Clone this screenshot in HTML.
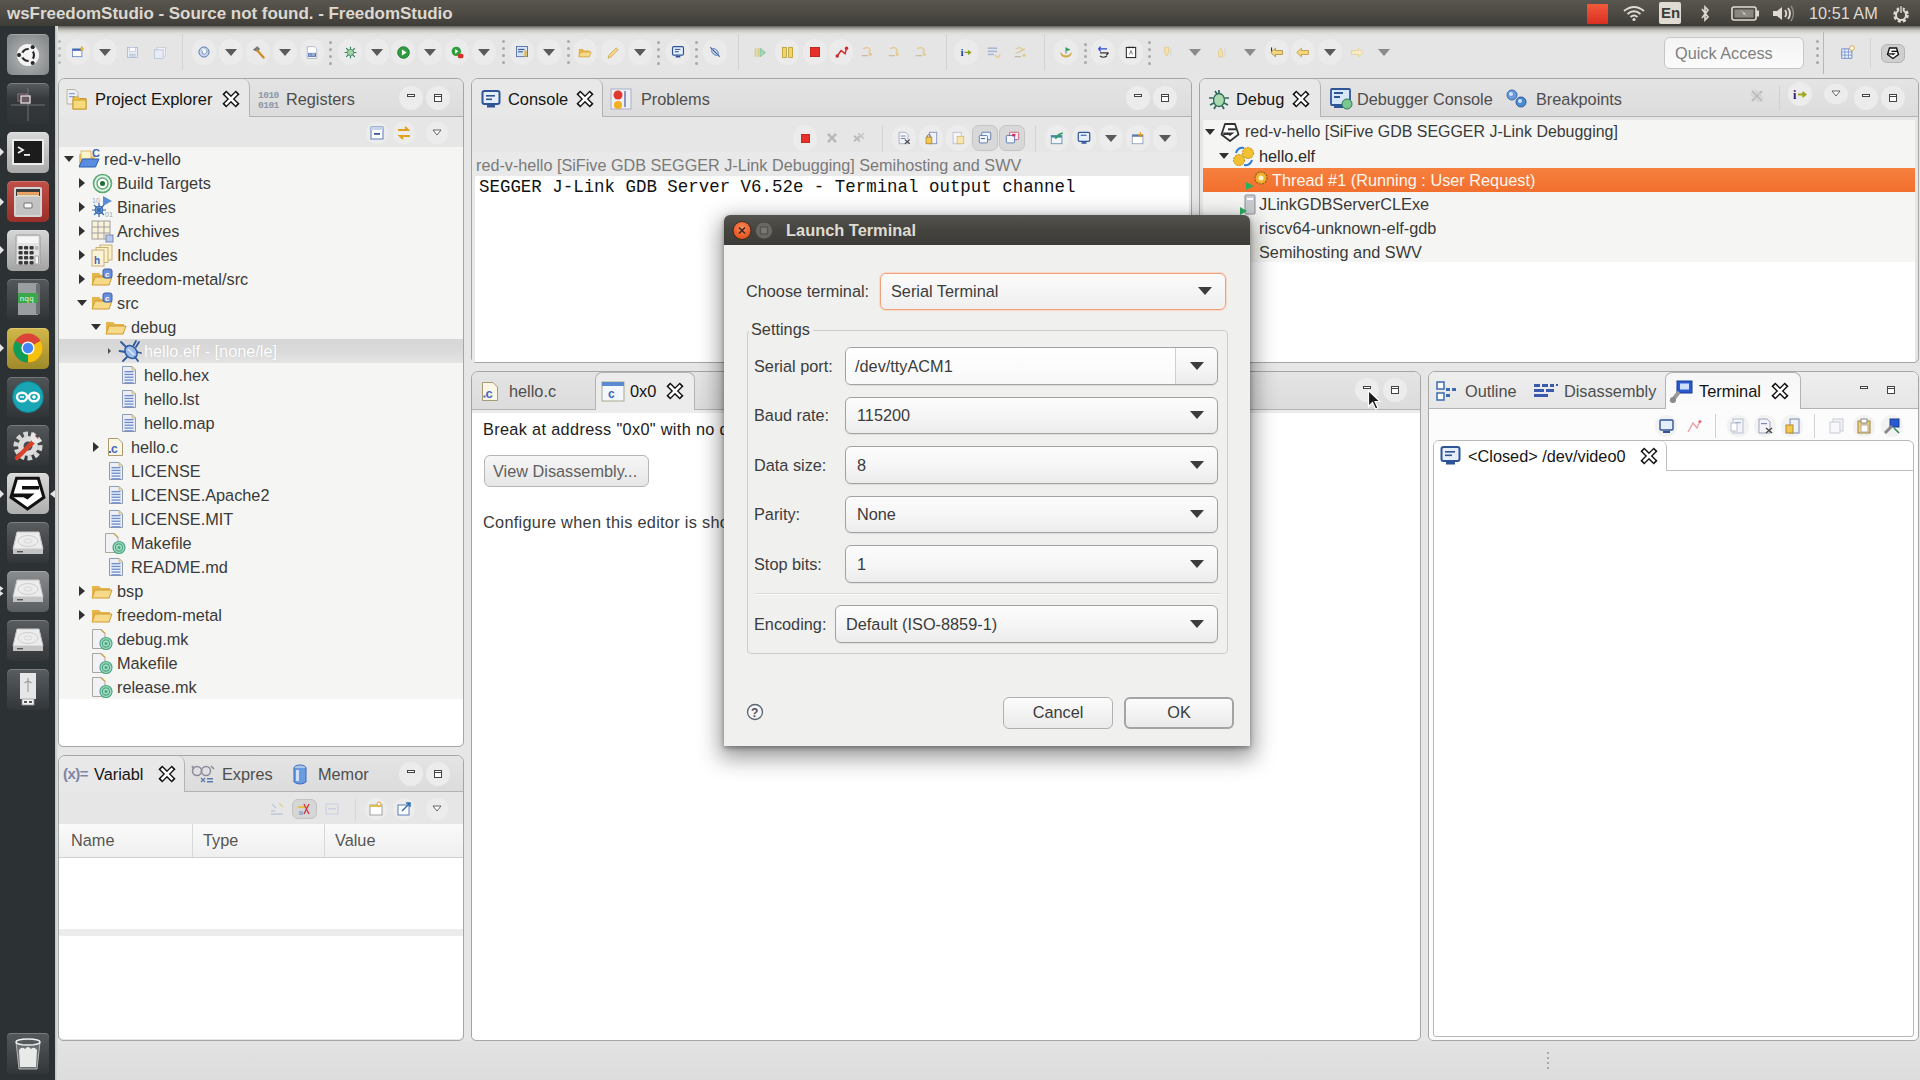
<!DOCTYPE html>
<html><head><meta charset="utf-8">
<style>
*{margin:0;padding:0;box-sizing:border-box}
html,body{width:1920px;height:1080px;overflow:hidden}
body{position:relative;background:#e6e6e6;font-family:"Liberation Sans",sans-serif}
.a{position:absolute}
.t{position:absolute;white-space:nowrap;line-height:24px;font-family:"Liberation Sans",sans-serif}
svg.a{overflow:visible}
</style></head><body>
<div class="a" style="left:0px;top:0px;width:1920px;height:26px;background:linear-gradient(#59564f,#4f4c46 45%,#3e3c37)"></div>
<div class="t" style="left:7px;top:2px;line-height:24px;font-size:17px;font-weight:bold;color:#dcd8cf;letter-spacing:-0.04px">wsFreedomStudio - Source not found. - FreedomStudio</div>
<div class="a" style="left:1587px;top:4px;width:21px;height:20px;background:linear-gradient(#f25a3a,#d92f22);border-radius:1px"></div>
<svg class="a" style="left:1622px;top:5px;" width="24" height="16" viewBox="0 0 24 16"><path d="M2 6 Q12 -2 22 6" stroke="#dfdbd2" stroke-width="2" fill="none"/><path d="M5.5 9 Q12 3.5 18.5 9" stroke="#dfdbd2" stroke-width="2" fill="none"/><path d="M8.5 12 Q12 9 15.5 12" stroke="#dfdbd2" stroke-width="2" fill="none"/><circle cx="12" cy="14.5" r="1.6" fill="#dfdbd2"/></svg>
<div class="a" style="left:1659px;top:2px;width:22px;height:22px;background:#dfdbd2;border-radius:2px"></div>
<div class="t" style="left:1661px;top:1px;line-height:24px;font-size:15px;font-weight:bold;color:#3c3b37">En</div>
<svg class="a" style="left:1699px;top:4px;" width="12" height="19" viewBox="0 0 12 19"><path d="M3 5 L9 13 L6 16 V3 L9 6 L3 14" stroke="#dfdbd2" stroke-width="1.6" fill="none"/></svg>
<svg class="a" style="left:1731px;top:6px;" width="29" height="15" viewBox="0 0 29 15"><rect x="1" y="1" width="24" height="13" rx="2" fill="none" stroke="#dfdbd2" stroke-width="1.6"/><rect x="25" y="4.5" width="3" height="6" fill="#dfdbd2"/><rect x="3.5" y="3.5" width="19" height="8" fill="#8a8780"/><path d="M9 4 L15 8 L13 8 L18 11 L11 7.5 L13 7.5 Z" fill="#dfdbd2"/></svg>
<svg class="a" style="left:1771px;top:4px;" width="24" height="19" viewBox="0 0 24 19"><path d="M2 7 H6 L11 3 V16 L6 12 H2 Z" fill="#dfdbd2"/><path d="M14 6 Q16.5 9.5 14 13" stroke="#dfdbd2" stroke-width="1.8" fill="none"/><path d="M17 4 Q21 9.5 17 15" stroke="#dfdbd2" stroke-width="1.8" fill="none"/><path d="M20 2 Q25 9.5 20 17" stroke="#8a8780" stroke-width="1.6" fill="none"/></svg>
<div class="t" style="left:1809px;top:1px;line-height:24px;font-size:16.3px;color:#dfdbd2">10:51 AM</div>
<svg class="a" style="left:1891px;top:4px;" width="20" height="20" viewBox="0 0 20 20"><circle cx="10" cy="11" r="6.5" fill="none" stroke="#dfdbd2" stroke-width="2.6" stroke-dasharray="3 2.1"/><circle cx="10" cy="11" r="5" fill="none" stroke="#dfdbd2" stroke-width="2"/><rect x="8.8" y="1.5" width="2.4" height="8" fill="#dfdbd2" stroke="#3c3b37" stroke-width="1"/></svg>
<div class="a" style="left:0px;top:26px;width:55px;height:1054px;background:#2c3134"></div>
<div class="a" style="left:55px;top:26px;width:3px;height:1054px;background:linear-gradient(90deg,#bfc1c1,#e4e4e4)"></div>
<div class="a" style="left:7px;top:34.0px;width:42px;height:41px;background:radial-gradient(circle at 50% 55%,#b9bcbc,#8e9292 70%,#7d8181);border-radius:5px;box-shadow:inset 0 1px 0 rgba(255,255,255,.22)"></div>
<div class="a" style="left:7px;top:83.0px;width:42px;height:41px;background:linear-gradient(#5a5d60,#35393b 40%,#303437);border-radius:5px;box-shadow:inset 0 1px 0 rgba(255,255,255,.22)"></div>
<div class="a" style="left:7px;top:131.8px;width:42px;height:41px;background:linear-gradient(#d9d9d9,#a9a9a9);border-radius:5px;box-shadow:inset 0 1px 0 rgba(255,255,255,.22)"></div>
<div class="a" style="left:7px;top:181.0px;width:42px;height:41px;background:linear-gradient(#c05048,#9a2e28);border-radius:5px;box-shadow:inset 0 1px 0 rgba(255,255,255,.22)"></div>
<div class="a" style="left:7px;top:229.8px;width:42px;height:41px;background:linear-gradient(#d6d6d6,#a3a3a3);border-radius:5px;box-shadow:inset 0 1px 0 rgba(255,255,255,.22)"></div>
<div class="a" style="left:7px;top:278.5px;width:42px;height:41px;background:linear-gradient(#55585a,#303437);border-radius:5px;box-shadow:inset 0 1px 0 rgba(255,255,255,.22)"></div>
<div class="a" style="left:7px;top:327.5px;width:42px;height:41px;background:linear-gradient(#d2b84a,#a08a28);border-radius:5px;box-shadow:inset 0 1px 0 rgba(255,255,255,.22)"></div>
<div class="a" style="left:7px;top:376.5px;width:42px;height:41px;background:linear-gradient(#505456,#303437);border-radius:5px;box-shadow:inset 0 1px 0 rgba(255,255,255,.22)"></div>
<div class="a" style="left:7px;top:425.0px;width:42px;height:41px;background:linear-gradient(#54575a,#303437);border-radius:5px;box-shadow:inset 0 1px 0 rgba(255,255,255,.22)"></div>
<div class="a" style="left:7px;top:473.2px;width:42px;height:41px;background:linear-gradient(#dadada,#aeaeae);border-radius:5px;box-shadow:inset 0 1px 0 rgba(255,255,255,.22)"></div>
<div class="a" style="left:7px;top:522.0px;width:42px;height:41px;background:linear-gradient(#5a5d5f,#323638);border-radius:5px;box-shadow:inset 0 1px 0 rgba(255,255,255,.22)"></div>
<div class="a" style="left:7px;top:570.8px;width:42px;height:41px;background:linear-gradient(#8a8d8f,#5a5e60);border-radius:5px;box-shadow:inset 0 1px 0 rgba(255,255,255,.22)"></div>
<div class="a" style="left:7px;top:619.5px;width:42px;height:41px;background:linear-gradient(#5a5d5f,#323638);border-radius:5px;box-shadow:inset 0 1px 0 rgba(255,255,255,.22)"></div>
<div class="a" style="left:7px;top:668.5px;width:42px;height:41px;background:linear-gradient(#5a5d5f,#323638);border-radius:5px;box-shadow:inset 0 1px 0 rgba(255,255,255,.22)"></div>
<svg class="a" style="left:15.0px;top:41.5px;" width="26" height="26" viewBox="0 0 26 26"><circle cx="13" cy="13" r="11" fill="#f4f4f4"/><circle cx="13" cy="13" r="6" fill="none" stroke="#2a2a2a" stroke-width="2.2"/><circle cx="17.6" cy="5.2" r="1.9" fill="#2a2a2a"/><circle cx="4.2" cy="13" r="1.9" fill="#2a2a2a"/><circle cx="17.6" cy="20.8" r="1.9" fill="#2a2a2a"/><circle cx="16.2" cy="7.5" r="2.6" fill="#f4f4f4"/><circle cx="6.8" cy="13" r="2.6" fill="#f4f4f4"/><circle cx="16.2" cy="18.5" r="2.6" fill="#f4f4f4"/><circle cx="17.6" cy="5.2" r="1.9" fill="#2a2a2a"/><circle cx="4.2" cy="13" r="1.9" fill="#2a2a2a"/><circle cx="17.6" cy="20.8" r="1.9" fill="#2a2a2a"/></svg>
<svg class="a" style="left:8.0px;top:84.0px;" width="40" height="39" viewBox="0 0 40 39"><path d="M20 4 V37 M3 21 H37" stroke="#6e7274" stroke-width="1"/><rect x="10" y="10" width="9" height="7" fill="none" stroke="#8a6a78" stroke-width="1.2"/><rect x="13" y="12" width="9" height="7" fill="#6a5a62" stroke="#e6dde0" stroke-width="1.3"/></svg>
<svg class="a" style="left:11.0px;top:138.3px;" width="34" height="28" viewBox="0 0 34 28"><rect x="1" y="1" width="32" height="26" rx="1" fill="#ececec"/><rect x="3" y="3" width="28" height="22" fill="#1c1c1c"/><path d="M7 9 L12 12 L7 15" stroke="#f0f0f0" stroke-width="1.8" fill="none"/><rect x="13" y="16" width="6" height="1.8" fill="#f0f0f0"/></svg>
<svg class="a" style="left:13.0px;top:184.5px;" width="30" height="34" viewBox="0 0 30 34"><rect x="1" y="2" width="28" height="30" rx="2" fill="#d4d4d4"/><rect x="3" y="4" width="24" height="7" fill="#3a3a3a"/><rect x="4" y="7" width="22" height="2.5" fill="#f0a060"/><rect x="4" y="9.5" width="22" height="1.5" fill="#f6d6a0"/><rect x="3" y="12" width="24" height="18" fill="#c2c2c2"/><rect x="11" y="18" width="8" height="5" rx="1" fill="#f6f6f6" stroke="#555" stroke-width="0.8"/></svg>
<svg class="a" style="left:15.0px;top:234.3px;" width="26" height="32" viewBox="0 0 26 32"><rect x="1" y="1" width="24" height="30" rx="1.5" fill="#e4e4e4" stroke="#9a9a9a"/><rect x="3" y="3" width="20" height="6" fill="#f6f6f6"/><rect x="3.5" y="12" width="4.2" height="3.6" rx="1" fill="#3a3a3a"/><rect x="9.0" y="12" width="4.2" height="3.6" rx="1" fill="#3a3a3a"/><rect x="14.5" y="12" width="4.2" height="3.6" rx="1" fill="#3a3a3a"/><rect x="3.5" y="17" width="4.2" height="3.6" rx="1" fill="#3a3a3a"/><rect x="9.0" y="17" width="4.2" height="3.6" rx="1" fill="#3a3a3a"/><rect x="14.5" y="17" width="4.2" height="3.6" rx="1" fill="#3a3a3a"/><rect x="3.5" y="22" width="4.2" height="3.6" rx="1" fill="#3a3a3a"/><rect x="9.0" y="22" width="4.2" height="3.6" rx="1" fill="#3a3a3a"/><rect x="14.5" y="22" width="4.2" height="3.6" rx="1" fill="#3a3a3a"/><rect x="3.5" y="27" width="4.2" height="3.6" rx="1" fill="#3a3a3a"/><rect x="9.0" y="27" width="4.2" height="3.6" rx="1" fill="#3a3a3a"/><rect x="14.5" y="27" width="4.2" height="3.6" rx="1" fill="#3a3a3a"/><rect x="20" y="12" width="3.5" height="4" rx="1" fill="#bbb"/><rect x="20" y="22" width="3.5" height="8" fill="#f8f8f8" stroke="#777" stroke-width="0.6"/></svg>
<svg class="a" style="left:14.0px;top:281.0px;" width="28" height="36" viewBox="0 0 28 36"><rect x="4" y="2" width="20" height="32" fill="#9a9ea0"/><rect x="22" y="3" width="4" height="30" fill="#6c7072"/><rect x="4" y="12" width="20" height="10" fill="#3aa84a"/><text x="5.5" y="20" font-size="8" fill="#e8f5e8" font-family="Liberation Mono">nqq</text></svg>
<svg class="a" style="left:12.0px;top:332.0px;" width="32" height="32" viewBox="0 0 32 32"><circle cx="16" cy="16" r="14.5" fill="#db4437"/><path d="M16 16 L28.6 8.75 A14.5 14.5 0 0 1 16 30.5 Z" fill="#f4c20d"/><path d="M16 16 L16 30.5 A14.5 14.5 0 0 1 3.4 8.75 Z" fill="#0f9d58"/><circle cx="16" cy="16" r="6.6" fill="#fff"/><circle cx="16" cy="16" r="5.2" fill="#4285f4"/></svg>
<svg class="a" style="left:10.0px;top:379.0px;" width="36" height="36" viewBox="0 0 36 36"><circle cx="18" cy="18" r="15.5" fill="#1aa5b5" stroke="#0e7e8c"/><ellipse cx="12" cy="18" rx="5" ry="4.3" fill="none" stroke="#fff" stroke-width="2.4"/><ellipse cx="24" cy="18" rx="5" ry="4.3" fill="none" stroke="#fff" stroke-width="2.4"/><path d="M10 18 H14 M22 18 H26 M24 16 V20" stroke="#fff" stroke-width="1.4"/></svg>
<svg class="a" style="left:10.0px;top:427.5px;" width="36" height="36" viewBox="0 0 36 36"><circle cx="18" cy="18" r="12" fill="none" stroke="#d6d6d6" stroke-width="5" stroke-dasharray="4.4 3"/><circle cx="18" cy="18" r="10" fill="#dcdcdc"/><circle cx="18" cy="18" r="4.5" fill="#4a4d50"/><path d="M7 30 L26 11" stroke="#d8402a" stroke-width="4.5" stroke-linecap="round"/><path d="M24 4 A6 6 0 1 0 32 12 L28 11 L25 8 Z" fill="#e8e8e8"/></svg>
<svg class="a" style="left:7px;top:473.0px;" width="42" height="42" viewBox="0 0 42 42"><path d="M9.6 5.3 H31.3 L36.9 24.3 L20.5 35.9 L4 24.3 Z" fill="#fff" stroke="#111" stroke-width="3" stroke-linejoin="miter"/><rect x="15" y="13" width="17" height="3.5" fill="#111"/><path d="M6 20.6 H27.6 L20.5 26.6 L16.5 24.3 H6 Z" fill="#111"/></svg>
<svg class="a" style="left:11.0px;top:529.5px;" width="34" height="26" viewBox="0 0 34 26"><path d="M6 2 H28 L32 19 H2 Z" fill="#ececec" stroke="#c8c8c8"/><ellipse cx="17" cy="11" rx="10" ry="5.5" fill="none" stroke="#cfcfcf"/><ellipse cx="17" cy="11" rx="4" ry="2" fill="none" stroke="#d8d8d8"/><rect x="2" y="19" width="30" height="5" fill="#c4c4c4"/><rect x="6" y="21" width="6" height="1.4" fill="#555"/></svg>
<svg class="a" style="left:11.0px;top:578.3px;" width="34" height="26" viewBox="0 0 34 26"><path d="M6 2 H28 L32 19 H2 Z" fill="#ececec" stroke="#c8c8c8"/><ellipse cx="17" cy="11" rx="10" ry="5.5" fill="none" stroke="#cfcfcf"/><ellipse cx="17" cy="11" rx="4" ry="2" fill="none" stroke="#d8d8d8"/><rect x="2" y="19" width="30" height="5" fill="#c4c4c4"/><rect x="6" y="21" width="6" height="1.4" fill="#555"/></svg>
<svg class="a" style="left:11.0px;top:627.0px;" width="34" height="26" viewBox="0 0 34 26"><path d="M6 2 H28 L32 19 H2 Z" fill="#ececec" stroke="#c8c8c8"/><ellipse cx="17" cy="11" rx="10" ry="5.5" fill="none" stroke="#cfcfcf"/><ellipse cx="17" cy="11" rx="4" ry="2" fill="none" stroke="#d8d8d8"/><rect x="2" y="19" width="30" height="5" fill="#c4c4c4"/><rect x="6" y="21" width="6" height="1.4" fill="#555"/></svg>
<svg class="a" style="left:18.0px;top:672.0px;" width="20" height="34" viewBox="0 0 20 34"><rect x="2" y="1" width="16" height="26" fill="#e6e6e6"/><path d="M10 6 V20 M6.5 11 L10 9 L13.5 11" stroke="#9a9a9a" stroke-width="1.1" fill="none"/><rect x="4" y="27" width="12" height="6" fill="#f2f2f2" stroke="#999" stroke-width="0.8"/><rect x="6" y="29" width="3" height="2" fill="#555"/><rect x="11" y="29" width="3" height="2" fill="#555"/></svg>
<div class="a" style="left:7px;top:1033px;width:42px;height:41px;background:linear-gradient(#55585a,#323638);border-radius:4px;box-shadow:inset 0 1px 0 rgba(255,255,255,.22)"></div>
<svg class="a" style="left:13px;top:1036px;" width="30" height="35" viewBox="0 0 30 35"><path d="M3 6 H27 L24 33 H6 Z" fill="#6a6e70" stroke="#c8cccc" stroke-width="0.8"/><ellipse cx="15" cy="6" rx="12" ry="3" fill="#55595b" stroke="#eeeeee" stroke-width="1.5"/><path d="M6 14 Q9 10 12 13 Q15 9 18 13 Q21 10 24 14 L23 31 H7 Z" fill="#e8eaea"/></svg>
<svg class="a" style="left:0px;top:148.3px;" width="4" height="8" viewBox="0 0 4 8"><path d="M0 0 L4 4 L0 8 Z" fill="#e5e5e5"/></svg>
<svg class="a" style="left:0px;top:197.5px;" width="4" height="8" viewBox="0 0 4 8"><path d="M0 0 L4 4 L0 8 Z" fill="#e5e5e5"/></svg>
<svg class="a" style="left:0px;top:246.3px;" width="4" height="8" viewBox="0 0 4 8"><path d="M0 0 L4 4 L0 8 Z" fill="#e5e5e5"/></svg>
<svg class="a" style="left:0px;top:344px;" width="4" height="8" viewBox="0 0 4 8"><path d="M0 0 L4 4 L0 8 Z" fill="#e5e5e5"/></svg>
<svg class="a" style="left:0px;top:489.7px;" width="4" height="8" viewBox="0 0 4 8"><path d="M0 0 L4 4 L0 8 Z" fill="#e5e5e5"/></svg>
<svg class="a" style="left:50px;top:489.7px;" width="5" height="8" viewBox="0 0 5 8"><path d="M5 0 L0 4 L5 8 Z" fill="#e5e5e5"/></svg>
<svg class="a" style="left:0px;top:586.3px;" width="4" height="10" viewBox="0 0 4 10"><path d="M0 0 L3.5 2.5 L0 5 Z M0 5 L3.5 7.5 L0 10 Z" fill="#e5e5e5"/></svg>
<div class="a" style="left:58px;top:26px;width:1862px;height:52px;background:#e5e5e5"></div>
<div class="a" style="left:58px;top:26px;width:1862px;height:10px;background:linear-gradient(#63615c,#9b9a95 20%,#c8c8c1 45%,#dfdfdc 75%,#e5e5e5)"></div>
<div class="a" style="left:57.5px;top:40px;width:3px;height:3px;border-radius:1.5px;background:#b8b8b8"></div>
<div class="a" style="left:57.5px;top:47px;width:3px;height:3px;border-radius:1.5px;background:#b8b8b8"></div>
<div class="a" style="left:57.5px;top:54px;width:3px;height:3px;border-radius:1.5px;background:#b8b8b8"></div>
<div class="a" style="left:57.5px;top:61px;width:3px;height:3px;border-radius:1.5px;background:#b8b8b8"></div>
<div class="a" style="left:66.0px;top:39.0px;width:24px;height:26px;border-radius:12px;background:#ebebeb"></div>
<svg class="a" style="left:70px;top:44px;transform:scale(.78);transform-origin:50% 50%;" width="16" height="16" viewBox="0 0 16 16"><rect x="1" y="4" width="12" height="10" fill="#fff" stroke="#5b7fbf"/><rect x="1" y="4" width="12" height="2.5" fill="#3f69b8"/><path d="M13 1 L15 4 L13 7 L11 4 Z" fill="#f1c232" stroke="#b58b00" stroke-width="0.6"/></svg>
<div class="a" style="left:93.0px;top:39.0px;width:24px;height:26px;border-radius:12px;background:#ebebeb"></div>
<div class="a" style="left:98.5px;top:48.5px;width:0;height:0;border-left:6.5px solid transparent;border-right:6.5px solid transparent;border-top:7px solid #5a5a5a"></div>
<svg class="a" style="left:125px;top:45px;transform:scale(.78);transform-origin:50% 50%;" width="15" height="15" viewBox="0 0 15 15"><rect x="1" y="1" width="13" height="13" fill="#e8ecf4" stroke="#a8b6cf"/><rect x="4" y="1" width="7" height="5" fill="#fff" stroke="#a8b6cf" stroke-width="0.7"/><rect x="3.5" y="9" width="8" height="4" fill="#c3cede"/></svg>
<svg class="a" style="left:152px;top:45px;transform:scale(.78);transform-origin:50% 50%;" width="16" height="16" viewBox="0 0 16 16"><rect x="4" y="1" width="11" height="11" fill="#eef1f6" stroke="#b7c2d6" stroke-width="0.8"/><rect x="1" y="4" width="11" height="11" fill="#e8ecf4" stroke="#a8b6cf" stroke-width="0.8"/></svg>
<div class="a" style="left:182px;top:34px;width:1px;height:36px;background:#d3d3d3"></div>
<div class="a" style="left:192.0px;top:39.0px;width:24px;height:26px;border-radius:12px;background:#ebebeb"></div>
<svg class="a" style="left:196px;top:44px;transform:scale(.78);transform-origin:50% 50%;" width="16" height="16" viewBox="0 0 16 16"><circle cx="8" cy="8" r="6.5" fill="#c8d6ee" stroke="#5577aa" stroke-width="1.2"/><path d="M4 5 Q7 7 6 10 Q9 12 11 9 Q13 6 10 4" fill="#fff" stroke="#46639a" stroke-width="0.8"/></svg>
<div class="a" style="left:219.0px;top:39.0px;width:24px;height:26px;border-radius:12px;background:#ebebeb"></div>
<div class="a" style="left:224.5px;top:48.5px;width:0;height:0;border-left:6.5px solid transparent;border-right:6.5px solid transparent;border-top:7px solid #5a5a5a"></div>
<div class="a" style="left:246.0px;top:39.0px;width:24px;height:26px;border-radius:12px;background:#ebebeb"></div>
<svg class="a" style="left:250px;top:44px;transform:scale(.78);transform-origin:50% 50%;" width="17" height="17" viewBox="0 0 17 17"><path d="M2 5 L7 1 L10 4 L7 7 Z" fill="#7a7a7a" stroke="#444" stroke-width="0.7"/><path d="M7 6 L15 15" stroke="#d08a2a" stroke-width="3" stroke-linecap="round"/></svg>
<div class="a" style="left:273.0px;top:39.0px;width:24px;height:26px;border-radius:12px;background:#ebebeb"></div>
<div class="a" style="left:278.5px;top:48.5px;width:0;height:0;border-left:6.5px solid transparent;border-right:6.5px solid transparent;border-top:7px solid #5a5a5a"></div>
<div class="a" style="left:300.0px;top:39.0px;width:24px;height:26px;border-radius:12px;background:#ebebeb"></div>
<svg class="a" style="left:304px;top:44px;transform:scale(.78);transform-origin:50% 50%;" width="16" height="17" viewBox="0 0 16 17"><path d="M2 1 H11 L14 4 V16 H2 Z" fill="#fff" stroke="#8a9ab8" stroke-width="0.8"/><rect x="3" y="9" width="10" height="5" fill="#3d63b0"/><text x="3.5" y="13.5" font-size="5" fill="#fff" font-family="Liberation Sans">638</text></svg>
<div class="a" style="left:328.5px;top:41px;width:3px;height:3px;border-radius:1.5px;background:#a8a8a8"></div>
<div class="a" style="left:328.5px;top:48px;width:3px;height:3px;border-radius:1.5px;background:#a8a8a8"></div>
<div class="a" style="left:328.5px;top:55px;width:3px;height:3px;border-radius:1.5px;background:#a8a8a8"></div>
<div class="a" style="left:328.5px;top:62px;width:3px;height:3px;border-radius:1.5px;background:#a8a8a8"></div>
<div class="a" style="left:338.0px;top:39.0px;width:24px;height:26px;border-radius:12px;background:#ebebeb"></div>
<svg class="a" style="left:342px;top:44px;transform:scale(.78);transform-origin:50% 50%;" width="17" height="17" viewBox="0 0 17 17"><circle cx="8.5" cy="8.5" r="4" fill="#9fd6a6" stroke="#2e7a52"/><path d="M8.5 1 V4 M8.5 13 V16 M1 8.5 H4 M13 8.5 H16 M3 3 L5.5 5.5 M14 3 L11.5 5.5 M3 14 L5.5 11.5 M14 14 L11.5 11.5" stroke="#2e7a52" stroke-width="1.4"/></svg>
<div class="a" style="left:365.0px;top:39.0px;width:24px;height:26px;border-radius:12px;background:#ebebeb"></div>
<div class="a" style="left:370.5px;top:48.5px;width:0;height:0;border-left:6.5px solid transparent;border-right:6.5px solid transparent;border-top:7px solid #5a5a5a"></div>
<div class="a" style="left:391.0px;top:39.0px;width:24px;height:26px;border-radius:12px;background:#ebebeb"></div>
<svg class="a" style="left:395px;top:44px;transform:scale(.78);transform-origin:50% 50%;" width="17" height="17" viewBox="0 0 17 17"><circle cx="8.5" cy="8.5" r="7.5" fill="#2e9e3e" stroke="#1c6e2a"/><path d="M6.5 4.5 L12.5 8.5 L6.5 12.5 Z" fill="#fff"/></svg>
<div class="a" style="left:418.0px;top:39.0px;width:24px;height:26px;border-radius:12px;background:#ebebeb"></div>
<div class="a" style="left:423.5px;top:48.5px;width:0;height:0;border-left:6.5px solid transparent;border-right:6.5px solid transparent;border-top:7px solid #5a5a5a"></div>
<div class="a" style="left:445.0px;top:39.0px;width:24px;height:26px;border-radius:12px;background:#ebebeb"></div>
<svg class="a" style="left:449px;top:44px;transform:scale(.78);transform-origin:50% 50%;" width="17" height="17" viewBox="0 0 17 17"><circle cx="7" cy="7" r="6" fill="#2e9e3e"/><path d="M5.5 4 L9.5 7 L5.5 10 Z" fill="#fff"/><rect x="9" y="10" width="7" height="6" rx="2" fill="#d9302a"/></svg>
<div class="a" style="left:472.0px;top:39.0px;width:24px;height:26px;border-radius:12px;background:#ebebeb"></div>
<div class="a" style="left:477.5px;top:48.5px;width:0;height:0;border-left:6.5px solid transparent;border-right:6.5px solid transparent;border-top:7px solid #5a5a5a"></div>
<div class="a" style="left:501.5px;top:40px;width:3px;height:3px;border-radius:1.5px;background:#a8a8a8"></div>
<div class="a" style="left:501.5px;top:47px;width:3px;height:3px;border-radius:1.5px;background:#a8a8a8"></div>
<div class="a" style="left:501.5px;top:54px;width:3px;height:3px;border-radius:1.5px;background:#a8a8a8"></div>
<div class="a" style="left:501.5px;top:61px;width:3px;height:3px;border-radius:1.5px;background:#a8a8a8"></div>
<div class="a" style="left:510.0px;top:39.0px;width:24px;height:26px;border-radius:12px;background:#ebebeb"></div>
<svg class="a" style="left:514px;top:44px;transform:scale(.78);transform-origin:50% 50%;" width="16" height="16" viewBox="0 0 16 16"><rect x="1" y="1" width="14" height="13" fill="#d6e2f5" stroke="#3f5f9f"/><rect x="3" y="4" width="8" height="1.5" fill="#3f5f9f"/><rect x="3" y="7" width="6" height="1.5" fill="#3f5f9f"/><rect x="11" y="6" width="3" height="8" fill="#e0b93a"/></svg>
<div class="a" style="left:537.0px;top:39.0px;width:24px;height:26px;border-radius:12px;background:#ebebeb"></div>
<div class="a" style="left:542.5px;top:48.5px;width:0;height:0;border-left:6.5px solid transparent;border-right:6.5px solid transparent;border-top:7px solid #5a5a5a"></div>
<div class="a" style="left:566.5px;top:40px;width:3px;height:3px;border-radius:1.5px;background:#a8a8a8"></div>
<div class="a" style="left:566.5px;top:47px;width:3px;height:3px;border-radius:1.5px;background:#a8a8a8"></div>
<div class="a" style="left:566.5px;top:54px;width:3px;height:3px;border-radius:1.5px;background:#a8a8a8"></div>
<div class="a" style="left:566.5px;top:61px;width:3px;height:3px;border-radius:1.5px;background:#a8a8a8"></div>
<div class="a" style="left:573.0px;top:39.0px;width:24px;height:26px;border-radius:12px;background:#ebebeb"></div>
<svg class="a" style="left:576px;top:45px;transform:scale(.78);transform-origin:50% 50%;" width="18" height="15" viewBox="0 0 18 15"><path d="M1 3 H6 L8 5 H15 V13 H1 Z" fill="#e3b54a"/><path d="M1 13 L3.5 7 H17 L14.5 13 Z" fill="#f7d98a" stroke="#d09a2c" stroke-width="0.8"/></svg>
<div class="a" style="left:601.0px;top:39.0px;width:24px;height:26px;border-radius:12px;background:#ebebeb"></div>
<svg class="a" style="left:605px;top:44px;transform:scale(.78);transform-origin:50% 50%;" width="17" height="17" viewBox="0 0 17 17"><path d="M3 15 L1.5 16 L2.5 12 L12 2.5 L14.5 5 L5 14.5 Z" fill="#f3d48a" stroke="#c69a3a" stroke-width="0.8"/></svg>
<div class="a" style="left:628.0px;top:39.0px;width:24px;height:26px;border-radius:12px;background:#ebebeb"></div>
<div class="a" style="left:633.5px;top:48.5px;width:0;height:0;border-left:6.5px solid transparent;border-right:6.5px solid transparent;border-top:7px solid #5a5a5a"></div>
<div class="a" style="left:656.5px;top:41px;width:3px;height:3px;border-radius:1.5px;background:#a8a8a8"></div>
<div class="a" style="left:656.5px;top:48px;width:3px;height:3px;border-radius:1.5px;background:#a8a8a8"></div>
<div class="a" style="left:656.5px;top:55px;width:3px;height:3px;border-radius:1.5px;background:#a8a8a8"></div>
<div class="a" style="left:656.5px;top:62px;width:3px;height:3px;border-radius:1.5px;background:#a8a8a8"></div>
<div class="a" style="left:666.0px;top:39.0px;width:24px;height:26px;border-radius:12px;background:#ebebeb"></div>
<svg class="a" style="left:670px;top:44px;transform:scale(.78);transform-origin:50% 50%;" width="16" height="16" viewBox="0 0 16 16"><rect x="1" y="1" width="14" height="11" rx="1.5" fill="#e6eefb" stroke="#2f5597" stroke-width="1.5"/><rect x="4" y="4" width="7" height="1.3" fill="#2f5597"/><rect x="4" y="7" width="5" height="1.3" fill="#2f5597"/><rect x="5" y="13" width="6" height="2" fill="#2f5597"/></svg>
<div class="a" style="left:694.5px;top:41px;width:3px;height:3px;border-radius:1.5px;background:#a8a8a8"></div>
<div class="a" style="left:694.5px;top:48px;width:3px;height:3px;border-radius:1.5px;background:#a8a8a8"></div>
<div class="a" style="left:694.5px;top:55px;width:3px;height:3px;border-radius:1.5px;background:#a8a8a8"></div>
<div class="a" style="left:694.5px;top:62px;width:3px;height:3px;border-radius:1.5px;background:#a8a8a8"></div>
<div class="a" style="left:703.0px;top:39.0px;width:24px;height:26px;border-radius:12px;background:#ebebeb"></div>
<svg class="a" style="left:707px;top:44px;transform:scale(.78);transform-origin:50% 50%;" width="16" height="16" viewBox="0 0 16 16"><path d="M2 2 L14 14" stroke="#2f5597" stroke-width="1.5"/><ellipse cx="8" cy="8" rx="5" ry="3" fill="none" stroke="#6a8ac8" stroke-width="1.3" transform="rotate(45 8 8)"/></svg>
<div class="a" style="left:738px;top:34px;width:1px;height:36px;background:#d3d3d3"></div>
<svg class="a" style="left:752px;top:45px;transform:scale(.78);transform-origin:50% 50%;" width="17" height="15" viewBox="0 0 17 15"><rect x="1" y="2" width="2.5" height="11" fill="#d8d08a"/><rect x="4.5" y="2" width="2.5" height="11" fill="#d8d08a"/><path d="M8 2 L15 7.5 L8 13 Z" fill="#9fd8b8" stroke="#6bb08a" stroke-width="0.7"/></svg>
<div class="a" style="left:775.0px;top:39.0px;width:24px;height:26px;border-radius:12px;background:#ebebeb"></div>
<svg class="a" style="left:780px;top:45px;transform:scale(.78);transform-origin:50% 50%;" width="15" height="15" viewBox="0 0 15 15"><rect x="1" y="1" width="5" height="13" fill="#f2d56a" stroke="#b89a2a"/><rect x="9" y="1" width="5" height="13" fill="#f2d56a" stroke="#b89a2a"/></svg>
<div class="a" style="left:803.0px;top:39.0px;width:24px;height:26px;border-radius:12px;background:#ebebeb"></div>
<div class="a" style="left:810px;top:47px;width:10px;height:10px;background:#e8302a;border:1px solid #c02a20"></div>
<div class="a" style="left:829.0px;top:39.0px;width:24px;height:26px;border-radius:12px;background:#ebebeb"></div>
<svg class="a" style="left:833px;top:44px;transform:scale(.78);transform-origin:50% 50%;" width="17" height="17" viewBox="0 0 17 17"><path d="M3 13 L8 6 L13 10 L15 3" stroke="#d02a2a" stroke-width="1.8" fill="none"/><circle cx="3" cy="13" r="2.2" fill="#d02a2a"/><circle cx="15" cy="3" r="2.2" fill="#d02a2a"/></svg>
<svg class="a" style="left:859px;top:44px;transform:scale(.78);transform-origin:50% 50%;" width="18" height="16" viewBox="0 0 18 16"><path d="M3 4 Q9 0 12 6 L10 9" stroke="#e3c98a" stroke-width="1.6" fill="none"/><rect x="1" y="12" width="8" height="1.5" fill="#c8b89a"/><circle cx="12" cy="11" r="2" fill="#e3c98a"/></svg>
<svg class="a" style="left:886px;top:44px;transform:scale(.78);transform-origin:50% 50%;" width="18" height="16" viewBox="0 0 18 16"><path d="M3 4 Q9 0 12 6 L10 9" stroke="#e3c98a" stroke-width="1.6" fill="none"/><rect x="1" y="12" width="8" height="1.5" fill="#c8b89a"/><circle cx="12" cy="11" r="2" fill="#e3c98a"/></svg>
<svg class="a" style="left:913px;top:44px;transform:scale(.78);transform-origin:50% 50%;" width="18" height="16" viewBox="0 0 18 16"><path d="M3 4 Q9 0 12 6 L10 9" stroke="#e3c98a" stroke-width="1.6" fill="none"/><rect x="1" y="12" width="8" height="1.5" fill="#c8b89a"/><circle cx="12" cy="11" r="2" fill="#e3c98a"/></svg>
<div class="a" style="left:946px;top:34px;width:1px;height:36px;background:#d3d3d3"></div>
<div class="a" style="left:954.0px;top:39.0px;width:24px;height:26px;border-radius:12px;background:#ebebeb"></div>
<svg class="a" style="left:958px;top:45px;transform:scale(.78);transform-origin:50% 50%;" width="17" height="14" viewBox="0 0 17 14"><text x="1" y="12" font-size="12" font-weight="bold" fill="#1a1a70" font-family="Liberation Serif">i</text><path d="M6 7.5 H13 M10.5 5 L13.5 7.5 L10.5 10" stroke="#8aa018" stroke-width="1.8" fill="none"/></svg>
<svg class="a" style="left:985px;top:44px;transform:scale(.78);transform-origin:50% 50%;" width="18" height="17" viewBox="0 0 18 17"><rect x="1" y="2" width="12" height="2" fill="#a8b8d8"/><rect x="1" y="6" width="12" height="2" fill="#a8b8d8"/><rect x="1" y="10" width="8" height="2" fill="#a8b8d8"/><path d="M10 12 L14 15 L17 11" stroke="#e3c98a" stroke-width="1.5" fill="none"/></svg>
<svg class="a" style="left:1012px;top:44px;transform:scale(.78);transform-origin:50% 50%;" width="18" height="17" viewBox="0 0 18 17"><path d="M3 4 Q9 0 12 6" stroke="#e3c98a" stroke-width="1.6" fill="none"/><path d="M2 10 L14 4" stroke="#d8c08a" stroke-width="1.3"/><rect x="1" y="13" width="8" height="1.5" fill="#c8b89a"/><circle cx="13" cy="12" r="2" fill="#e3c98a"/></svg>
<div class="a" style="left:1044px;top:34px;width:1px;height:36px;background:#d3d3d3"></div>
<div class="a" style="left:1054.0px;top:39.0px;width:24px;height:26px;border-radius:12px;background:#ebebeb"></div>
<svg class="a" style="left:1057px;top:44px;transform:scale(.78);transform-origin:50% 50%;" width="18" height="17" viewBox="0 0 18 17"><path d="M2 9 Q9 17 16 9 L14 13 Q9 16 4 13 Z" fill="#f2c84a" stroke="#b8902a" stroke-width="0.8"/><path d="M9 2 V10" stroke="#555" stroke-width="1"/><path d="M9 2 L15 5 L9 7 Z" fill="#2e9e5e"/></svg>
<div class="a" style="left:1083.5px;top:43px;width:3px;height:3px;border-radius:1.5px;background:#a8a8a8"></div>
<div class="a" style="left:1083.5px;top:49px;width:3px;height:3px;border-radius:1.5px;background:#a8a8a8"></div>
<div class="a" style="left:1083.5px;top:55px;width:3px;height:3px;border-radius:1.5px;background:#a8a8a8"></div>
<div class="a" style="left:1083.5px;top:61px;width:3px;height:3px;border-radius:1.5px;background:#a8a8a8"></div>
<div class="a" style="left:1091.0px;top:39.0px;width:24px;height:26px;border-radius:12px;background:#ebebeb"></div>
<svg class="a" style="left:1095px;top:44px;transform:scale(.78);transform-origin:50% 50%;" width="17" height="17" viewBox="0 0 17 17"><path d="M2 4 H13 M2 4 L5 1 M2 4 L5 7" stroke="#2a4ad0" stroke-width="1.6" fill="none"/><path d="M15 9 H4 M15 9 L12 12" stroke="#333" stroke-width="1.6" fill="none"/><path d="M4 13 Q8 16 13 13" stroke="#333" stroke-width="1.4" fill="none"/></svg>
<div class="a" style="left:1119.0px;top:39.0px;width:24px;height:26px;border-radius:12px;background:#ebebeb"></div>
<svg class="a" style="left:1123px;top:44px;transform:scale(.78);transform-origin:50% 50%;" width="16" height="17" viewBox="0 0 16 17"><rect x="2" y="2" width="12" height="13" fill="#fff" stroke="#222" stroke-width="1.3"/><rect x="5" y="1" width="2" height="2" fill="#222"/><rect x="9" y="1" width="2" height="2" fill="#222"/><path d="M6 11 L8 6 L10 11" stroke="#555" fill="none"/></svg>
<div class="a" style="left:1147.5px;top:41px;width:3px;height:3px;border-radius:1.5px;background:#a8a8a8"></div>
<div class="a" style="left:1147.5px;top:48px;width:3px;height:3px;border-radius:1.5px;background:#a8a8a8"></div>
<div class="a" style="left:1147.5px;top:55px;width:3px;height:3px;border-radius:1.5px;background:#a8a8a8"></div>
<div class="a" style="left:1147.5px;top:62px;width:3px;height:3px;border-radius:1.5px;background:#a8a8a8"></div>
<svg class="a" style="left:1159px;top:44px;transform:scale(.78);transform-origin:50% 50%;" width="16" height="17" viewBox="0 0 16 17"><path d="M5 2 H10 V9 L7.5 13 L5 9 Z" fill="#f5e2a8" stroke="#dcc07a" stroke-width="0.8"/><path d="M13 3 V14" stroke="#cfcfcf"/></svg>
<div class="a" style="left:1188.5px;top:48.5px;width:0;height:0;border-left:6.5px solid transparent;border-right:6.5px solid transparent;border-top:7px solid #8a8a8a"></div>
<svg class="a" style="left:1213px;top:44px;transform:scale(.78);transform-origin:50% 50%;" width="16" height="17" viewBox="0 0 16 17"><path d="M5 14 H10 V7 L7.5 3 L5 7 Z" fill="#f5e2a8" stroke="#dcc07a" stroke-width="0.8"/><path d="M13 3 V14" stroke="#cfcfcf"/></svg>
<div class="a" style="left:1243.5px;top:48.5px;width:0;height:0;border-left:6.5px solid transparent;border-right:6.5px solid transparent;border-top:7px solid #8a8a8a"></div>
<div class="a" style="left:1265.0px;top:39.0px;width:24px;height:26px;border-radius:12px;background:#ebebeb"></div>
<svg class="a" style="left:1268px;top:45px;transform:scale(.78);transform-origin:50% 50%;" width="18" height="15" viewBox="0 0 18 15"><path d="M1 7.5 L7 2 V5 H16 V10 H7 V13 Z" fill="#f4d97a" stroke="#9a7a2a" stroke-width="0.9"/><path d="M2 1 V6" stroke="#333" stroke-width="1.4"/></svg>
<div class="a" style="left:1291.0px;top:39.0px;width:24px;height:26px;border-radius:12px;background:#ebebeb"></div>
<svg class="a" style="left:1294px;top:45px;transform:scale(.78);transform-origin:50% 50%;" width="18" height="15" viewBox="0 0 18 15"><path d="M1 7.5 L7 2 V5 H16 V10 H7 V13 Z" fill="#f4d97a" stroke="#b08a2a" stroke-width="0.9"/></svg>
<div class="a" style="left:1318.0px;top:39.0px;width:24px;height:26px;border-radius:12px;background:#ebebeb"></div>
<div class="a" style="left:1323.5px;top:48.5px;width:0;height:0;border-left:6.5px solid transparent;border-right:6.5px solid transparent;border-top:7px solid #5a5a5a"></div>
<svg class="a" style="left:1348px;top:45px;transform:scale(.78);transform-origin:50% 50%;" width="18" height="15" viewBox="0 0 18 15"><path d="M17 7.5 L11 2 V5 H2 V10 H11 V13 Z" fill="#f8ecc4" stroke="#e0c88a" stroke-width="0.9"/></svg>
<div class="a" style="left:1377.5px;top:48.5px;width:0;height:0;border-left:6.5px solid transparent;border-right:6.5px solid transparent;border-top:7px solid #8a8a8a"></div>
<div class="a" style="left:1664px;top:37px;width:140px;height:32px;background:linear-gradient(#f4f4f4,#fbfbfb);border:1px solid #c6c6c6;border-radius:6px"></div>
<div class="t" style="left:1675px;top:41px;line-height:24px;font-size:16.3px;color:#808080">Quick Access</div>
<div class="a" style="left:1815.5px;top:40px;width:3px;height:3px;border-radius:1.5px;background:#a8a8a8"></div>
<div class="a" style="left:1815.5px;top:47px;width:3px;height:3px;border-radius:1.5px;background:#a8a8a8"></div>
<div class="a" style="left:1815.5px;top:54px;width:3px;height:3px;border-radius:1.5px;background:#a8a8a8"></div>
<div class="a" style="left:1815.5px;top:61px;width:3px;height:3px;border-radius:1.5px;background:#a8a8a8"></div>
<div class="a" style="left:1823px;top:32px;width:1px;height:42px;background:#b8b8b8"></div>
<svg class="a" style="left:1839px;top:43px;transform:scale(.78);transform-origin:50% 50%;" width="18" height="18" viewBox="0 0 18 18"><rect x="1" y="5" width="13" height="12" fill="#e9f0fb" stroke="#5a7ab8"/><path d="M1 9 H14 M1 13 H14 M5 5 V17 M9.5 5 V17" stroke="#5a7ab8" stroke-width="0.8"/><circle cx="14" cy="4" r="3" fill="#fff" stroke="#e0a030" stroke-width="1.2"/></svg>
<div class="a" style="left:1870px;top:38px;width:1px;height:30px;background:#d3d3d3"></div>
<div class="a" style="left:1881px;top:44px;width:24px;height:19px;background:#cfcfcf;border:1px solid #b4b4b4;border-radius:6px"></div>
<svg class="a" style="left:1884px;top:44px;transform:scale(.78);transform-origin:50% 50%;" width="18" height="18" viewBox="0 0 18 18"><path d="M4.5 2.5 H13.5 L16 11 L9 16 L2 11 Z" fill="#fff" stroke="#111" stroke-width="1.8"/><rect x="7" y="6" width="7.5" height="1.8" fill="#111"/><path d="M3 9.3 H12.5 L9 12 L7.3 11 H3 Z" fill="#111"/></svg>
<div class="a" style="left:58px;top:78px;width:406px;height:669px;border:1px solid #a6a6a6;border-radius:7px 7px 5px 5px;background:#e6e6e6"></div>
<div class="a" style="left:59px;top:79px;width:404px;height:37px;background:linear-gradient(#e4e4e4,#dcdcdc);border-radius:6px 6px 0 0"></div>
<div class="a" style="left:59px;top:116px;width:404px;height:1px;background:#b3b3b3"></div>
<div class="a" style="left:59px;top:79px;width:191px;height:38px;background:#e8e8e8;border-right:1px solid #b3b3b3;border-top-right-radius:7px;border-top-left-radius:6px;"></div>
<svg class="a" style="left:65px;top:88px;" width="22" height="22" viewBox="0 0 22 22"><path d="M2 1.5 H10 L13 4.5 V16 H2 Z" fill="#eef0f6" stroke="#b9b3a0"/><rect x="4" y="5" width="6" height="1.2" fill="#8aa0d0"/><rect x="4" y="8" width="6" height="1.2" fill="#8aa0d0"/><path d="M8 9 H13 L14.5 10.5 H21 V21 H8 Z" fill="#f2c84e" stroke="#c89a2a"/><rect x="8" y="12" width="13" height="9" fill="#f7da7c" stroke="#c89a2a"/></svg>
<div class="t" style="left:95px;top:87px;font-size:16.5px;color:#141414;font-weight:normal;">Project Explorer</div>
<svg class="a" style="left:223px;top:91px;" width="16" height="16" viewBox="0 0 16 16"><path d="M3.2 3.2 L12.8 12.8 M12.8 3.2 L3.2 12.8" stroke="#111" stroke-width="5.4" stroke-linecap="square" stroke-linejoin="round"/><path d="M3.4 3.4 L12.6 12.6 M12.6 3.4 L3.4 12.6" stroke="#fff" stroke-width="2.6" stroke-linecap="square"/></svg>
<svg class="a" style="left:258px;top:89px;" width="23" height="20" viewBox="0 0 23 20"><text x="0" y="9" font-size="9.5" font-weight="bold" fill="#8d97a6" font-family="Liberation Mono" letter-spacing="-0.5">1010</text><text x="0" y="19" font-size="9.5" font-weight="bold" fill="#8d97a6" font-family="Liberation Mono" letter-spacing="-0.5">0101</text></svg>
<div class="t" style="left:286px;top:87px;font-size:16.3px;color:#4e4e4e;font-weight:normal;">Registers</div>
<div class="a" style="left:399.0px;top:86.0px;width:24px;height:24px;border-radius:12px;background:#ececec"></div>
<div class="a" style="left:407px;top:94px;width:8px;height:3px;border:1px solid #444;background:#fff"></div>
<div class="a" style="left:426.0px;top:86.0px;width:24px;height:24px;border-radius:12px;background:#ececec"></div>
<div class="a" style="left:434px;top:94px;width:8px;height:8px;border:1px solid #444;border-top:3px double #444;background:#fff"></div>
<div class="a" style="left:366.0px;top:122.0px;width:22px;height:22px;border-radius:10px;background:#ececec"></div>
<svg class="a" style="left:369px;top:125px;" width="16" height="16" viewBox="0 0 16 16"><rect x="2" y="2" width="12" height="12" fill="#fff" stroke="#5a7ab8"/><rect x="2" y="2" width="12" height="3" fill="#c8d4ec"/><rect x="5" y="8" width="6" height="1.8" fill="#3a5a98"/></svg>
<div class="a" style="left:393.0px;top:122.0px;width:22px;height:22px;border-radius:10px;background:#ececec"></div>
<svg class="a" style="left:396px;top:125px;" width="16" height="16" viewBox="0 0 16 16"><path d="M2 5 H12 L9 2 M14 11 H4 L7 14" stroke="#e0a020" stroke-width="2" fill="none"/></svg>
<div class="a" style="left:426.0px;top:122.0px;width:22px;height:22px;border-radius:10px;background:#ececec"></div>
<svg class="a" style="left:432px;top:129px;" width="10" height="7" viewBox="0 0 10 7"><path d="M1 1 H9 L5 6 Z" fill="#fff" stroke="#555" stroke-width="0.9"/></svg>
<div class="a" style="left:59px;top:147px;width:404px;height:552px;background:#f5f6f4"></div>
<div class="a" style="left:59px;top:699px;width:404px;height:47px;background:#ffffff;border-radius:0 0 5px 5px"></div>
<div class="a" style="left:59px;top:339px;width:404px;height:24px;background:linear-gradient(#d6d6d6,#dadada 50%,#e4e4e4)"></div>
<div class="a" style="left:63.5px;top:156.0px;width:0;height:0;border-left:5.5px solid transparent;border-right:5.5px solid transparent;border-top:6px solid #303030"></div>
<svg class="a" style="left:78px;top:148px;" width="23" height="21" viewBox="0 0 23 21"><path d="M1 6 H8 L10 8 H17 V19 H1 Z" fill="#e8c46a"/><rect x="3" y="3" width="10" height="8" fill="#fff3c8" stroke="#c8a04a" stroke-width="0.7"/><path d="M1 19 L4.5 11 H21 L17.5 19 Z" fill="#5a8de0" stroke="#2f5fb0"/><text x="14" y="9" font-size="11" font-weight="bold" fill="#3a62b8" font-family="Liberation Sans">C</text></svg>
<div class="t" style="left:104px;top:147px;font-size:16.3px;color:#3a3a3a;font-weight:normal;">red-v-hello</div>
<div class="a" style="left:79.0px;top:177.5px;width:0;height:0;border-top:5.5px solid transparent;border-bottom:5.5px solid transparent;border-left:6px solid #303030"></div>
<svg class="a" style="left:92px;top:173px;" width="21" height="21" viewBox="0 0 21 21"><circle cx="10.5" cy="10.5" r="9" fill="#e2f2e6" stroke="#5fa878" stroke-width="1.6"/><circle cx="10.5" cy="10.5" r="5.5" fill="#fff" stroke="#5fa878" stroke-width="1.4"/><circle cx="10.5" cy="10.5" r="2.5" fill="#1e6e30"/></svg>
<div class="t" style="left:117px;top:171px;font-size:16.3px;color:#3a3a3a;font-weight:normal;">Build Targets</div>
<div class="a" style="left:79.0px;top:201.5px;width:0;height:0;border-top:5.5px solid transparent;border-bottom:5.5px solid transparent;border-left:6px solid #303030"></div>
<svg class="a" style="left:91px;top:195px;" width="23" height="24" viewBox="0 0 23 24"><text x="1" y="8" font-size="7" fill="#9aa6b8" font-family="Liberation Sans">10</text><path d="M12 1 L21 6 L12 11 Z" fill="#5a8fd8"/><circle cx="8" cy="15" r="4" fill="#8fb8e0" stroke="#3a6ab0"/><path d="M8 8 V22 M1 15 H15 M3 10 L13 20 M13 10 L3 20" stroke="#3a6ab0" stroke-width="1.2"/><text x="14" y="22" font-size="7" fill="#9aa6b8" font-family="Liberation Sans">01</text></svg>
<div class="t" style="left:117px;top:195px;font-size:16.3px;color:#3a3a3a;font-weight:normal;">Binaries</div>
<div class="a" style="left:79.0px;top:225.5px;width:0;height:0;border-top:5.5px solid transparent;border-bottom:5.5px solid transparent;border-left:6px solid #303030"></div>
<svg class="a" style="left:91px;top:220px;" width="23" height="23" viewBox="0 0 23 23"><rect x="1" y="1" width="18" height="18" fill="#fbf0d8" stroke="#a0a0a0"/><path d="M7 1 V19 M13 1 V19 M1 7 H19 M1 13 H19" stroke="#a0a0a0"/><rect x="15" y="15" width="7" height="7" fill="#b8c8e8" stroke="#7a8ab0"/></svg>
<div class="t" style="left:117px;top:219px;font-size:16.3px;color:#3a3a3a;font-weight:normal;">Archives</div>
<div class="a" style="left:79.0px;top:249.5px;width:0;height:0;border-top:5.5px solid transparent;border-bottom:5.5px solid transparent;border-left:6px solid #303030"></div>
<svg class="a" style="left:91px;top:244px;" width="23" height="23" viewBox="0 0 23 23"><rect x="9" y="1" width="12" height="15" fill="#fbf0c8" stroke="#c8b07a"/><rect x="5" y="3.5" width="12" height="15" fill="#fbf0c8" stroke="#c8b07a"/><rect x="1" y="6" width="12" height="16" fill="#fbf3d8" stroke="#c8b07a"/><text x="3" y="20" font-size="10" font-weight="bold" fill="#3a62b8" font-family="Liberation Sans">h</text></svg>
<div class="t" style="left:117px;top:243px;font-size:16.3px;color:#3a3a3a;font-weight:normal;">Includes</div>
<div class="a" style="left:79.0px;top:273.5px;width:0;height:0;border-top:5.5px solid transparent;border-bottom:5.5px solid transparent;border-left:6px solid #303030"></div>
<svg class="a" style="left:91px;top:269px;" width="22" height="19" viewBox="0 0 22 19"><path d="M1 4 H8 L10 6 H19 V16 H1 Z" fill="#e3b54a"/><path d="M1 16 L4 8 H21 L18 16 Z" fill="#f7d98a" stroke="#d09a2c" stroke-width="1"/><rect x="12" y="0" width="9" height="9" rx="2" fill="#6a8fd8" stroke="#3d5fa8"/><text x="14" y="8" font-size="8" font-weight="bold" fill="#fff" font-family="Liberation Sans">c</text></svg>
<div class="t" style="left:117px;top:267px;font-size:16.3px;color:#3a3a3a;font-weight:normal;">freedom-metal/src</div>
<div class="a" style="left:76.5px;top:300.0px;width:0;height:0;border-left:5.5px solid transparent;border-right:5.5px solid transparent;border-top:6px solid #303030"></div>
<svg class="a" style="left:91px;top:293px;" width="22" height="19" viewBox="0 0 22 19"><path d="M1 4 H8 L10 6 H19 V16 H1 Z" fill="#e3b54a"/><path d="M1 16 L4 8 H21 L18 16 Z" fill="#f7d98a" stroke="#d09a2c" stroke-width="1"/><rect x="12" y="0" width="9" height="9" rx="2" fill="#6a8fd8" stroke="#3d5fa8"/><text x="14" y="8" font-size="8" font-weight="bold" fill="#fff" font-family="Liberation Sans">c</text></svg>
<div class="t" style="left:117px;top:291px;font-size:16.3px;color:#3a3a3a;font-weight:normal;">src</div>
<div class="a" style="left:90.5px;top:324.0px;width:0;height:0;border-left:5.5px solid transparent;border-right:5.5px solid transparent;border-top:6px solid #303030"></div>
<svg class="a" style="left:105px;top:318px;" width="22" height="18" viewBox="0 0 22 18"><path d="M1 4 H8 L10 6 H19 V16 H1 Z" fill="#e3b54a"/><path d="M1 16 L4 8 H21 L18 16 Z" fill="#f7d98a" stroke="#d09a2c" stroke-width="1"/></svg>
<div class="t" style="left:131px;top:315px;font-size:16.3px;color:#3a3a3a;font-weight:normal;">debug</div>
<div class="a" style="left:107.5px;top:348.0px;width:0;height:0;border-top:3.0px solid transparent;border-bottom:3.0px solid transparent;border-left:3px solid #505050"></div>
<svg class="a" style="left:118px;top:339px;" width="24" height="24" viewBox="0 0 24 24"><ellipse cx="13" cy="13" rx="5.5" ry="7" transform="rotate(-40 13 13)" fill="#9cbcec" stroke="#2f5a9e" stroke-width="1.5"/><path d="M8 8 L3 3 M7 13 L1.5 12 M9 18 L5 22 M18 8 L21 3 M19 13 L23 14 M17 18 L20 22 M15.5 6.5 L18 2" stroke="#2f5a9e" stroke-width="1.8" stroke-linecap="round"/><path d="M10 10 L16 16" stroke="#dfe9fa" stroke-width="1.4"/></svg>
<div class="t" style="left:144px;top:339px;font-size:16.3px;color:#ffffff;font-weight:normal;text-shadow:0 0 1px #bbb">hello.elf - [none/le]</div>
<svg class="a" style="left:121px;top:365px;" width="16" height="20" viewBox="0 0 16 20"><path d="M1.5 1.5 H11 L14.5 5 V18.5 H1.5 Z" fill="#e9eef8" stroke="#8e9cb2"/><path d="M11 1.5 V5 H14.5 Z" fill="#f0e6c8" stroke="#c8b078" stroke-width="0.8"/><rect x="3.5" y="6.0" width="9" height="1.3" fill="#6f8cc4"/><rect x="3.5" y="8.8" width="9" height="1.3" fill="#6f8cc4"/><rect x="3.5" y="11.6" width="9" height="1.3" fill="#6f8cc4"/><rect x="3.5" y="14.399999999999999" width="9" height="1.3" fill="#6f8cc4"/><rect x="3.5" y="17.2" width="9" height="1.3" fill="#6f8cc4"/></svg>
<div class="t" style="left:144px;top:363px;font-size:16.3px;color:#3a3a3a;font-weight:normal;">hello.hex</div>
<svg class="a" style="left:121px;top:389px;" width="16" height="20" viewBox="0 0 16 20"><path d="M1.5 1.5 H11 L14.5 5 V18.5 H1.5 Z" fill="#e9eef8" stroke="#8e9cb2"/><path d="M11 1.5 V5 H14.5 Z" fill="#f0e6c8" stroke="#c8b078" stroke-width="0.8"/><rect x="3.5" y="6.0" width="9" height="1.3" fill="#6f8cc4"/><rect x="3.5" y="8.8" width="9" height="1.3" fill="#6f8cc4"/><rect x="3.5" y="11.6" width="9" height="1.3" fill="#6f8cc4"/><rect x="3.5" y="14.399999999999999" width="9" height="1.3" fill="#6f8cc4"/><rect x="3.5" y="17.2" width="9" height="1.3" fill="#6f8cc4"/></svg>
<div class="t" style="left:144px;top:387px;font-size:16.3px;color:#3a3a3a;font-weight:normal;">hello.lst</div>
<svg class="a" style="left:121px;top:413px;" width="16" height="20" viewBox="0 0 16 20"><path d="M1.5 1.5 H11 L14.5 5 V18.5 H1.5 Z" fill="#e9eef8" stroke="#8e9cb2"/><path d="M11 1.5 V5 H14.5 Z" fill="#f0e6c8" stroke="#c8b078" stroke-width="0.8"/><rect x="3.5" y="6.0" width="9" height="1.3" fill="#6f8cc4"/><rect x="3.5" y="8.8" width="9" height="1.3" fill="#6f8cc4"/><rect x="3.5" y="11.6" width="9" height="1.3" fill="#6f8cc4"/><rect x="3.5" y="14.399999999999999" width="9" height="1.3" fill="#6f8cc4"/><rect x="3.5" y="17.2" width="9" height="1.3" fill="#6f8cc4"/></svg>
<div class="t" style="left:144px;top:411px;font-size:16.3px;color:#3a3a3a;font-weight:normal;">hello.map</div>
<div class="a" style="left:93.0px;top:441.5px;width:0;height:0;border-top:5.5px solid transparent;border-bottom:5.5px solid transparent;border-left:6px solid #303030"></div>
<svg class="a" style="left:107px;top:437px;" width="18" height="20" viewBox="0 0 18 20"><path d="M1.5 1.5 H11 L15.5 6 V18.5 H1.5 Z" fill="#fbf6e6" stroke="#a89a72"/><text x="4" y="16" font-size="12" font-weight="bold" fill="#3b68c0" font-family="Liberation Sans">c</text><rect x="2" y="14" width="2" height="2" fill="#3b68c0"/></svg>
<div class="t" style="left:131px;top:435px;font-size:16.3px;color:#3a3a3a;font-weight:normal;">hello.c</div>
<svg class="a" style="left:108px;top:461px;" width="16" height="20" viewBox="0 0 16 20"><path d="M1.5 1.5 H11 L14.5 5 V18.5 H1.5 Z" fill="#e9eef8" stroke="#8e9cb2"/><path d="M11 1.5 V5 H14.5 Z" fill="#f0e6c8" stroke="#c8b078" stroke-width="0.8"/><rect x="3.5" y="6.0" width="9" height="1.3" fill="#6f8cc4"/><rect x="3.5" y="8.8" width="9" height="1.3" fill="#6f8cc4"/><rect x="3.5" y="11.6" width="9" height="1.3" fill="#6f8cc4"/><rect x="3.5" y="14.399999999999999" width="9" height="1.3" fill="#6f8cc4"/><rect x="3.5" y="17.2" width="9" height="1.3" fill="#6f8cc4"/></svg>
<div class="t" style="left:131px;top:459px;font-size:16.3px;color:#3a3a3a;font-weight:normal;">LICENSE</div>
<svg class="a" style="left:108px;top:485px;" width="16" height="20" viewBox="0 0 16 20"><path d="M1.5 1.5 H11 L14.5 5 V18.5 H1.5 Z" fill="#e9eef8" stroke="#8e9cb2"/><path d="M11 1.5 V5 H14.5 Z" fill="#f0e6c8" stroke="#c8b078" stroke-width="0.8"/><rect x="3.5" y="6.0" width="9" height="1.3" fill="#6f8cc4"/><rect x="3.5" y="8.8" width="9" height="1.3" fill="#6f8cc4"/><rect x="3.5" y="11.6" width="9" height="1.3" fill="#6f8cc4"/><rect x="3.5" y="14.399999999999999" width="9" height="1.3" fill="#6f8cc4"/><rect x="3.5" y="17.2" width="9" height="1.3" fill="#6f8cc4"/></svg>
<div class="t" style="left:131px;top:483px;font-size:16.3px;color:#3a3a3a;font-weight:normal;">LICENSE.Apache2</div>
<svg class="a" style="left:108px;top:509px;" width="16" height="20" viewBox="0 0 16 20"><path d="M1.5 1.5 H11 L14.5 5 V18.5 H1.5 Z" fill="#e9eef8" stroke="#8e9cb2"/><path d="M11 1.5 V5 H14.5 Z" fill="#f0e6c8" stroke="#c8b078" stroke-width="0.8"/><rect x="3.5" y="6.0" width="9" height="1.3" fill="#6f8cc4"/><rect x="3.5" y="8.8" width="9" height="1.3" fill="#6f8cc4"/><rect x="3.5" y="11.6" width="9" height="1.3" fill="#6f8cc4"/><rect x="3.5" y="14.399999999999999" width="9" height="1.3" fill="#6f8cc4"/><rect x="3.5" y="17.2" width="9" height="1.3" fill="#6f8cc4"/></svg>
<div class="t" style="left:131px;top:507px;font-size:16.3px;color:#3a3a3a;font-weight:normal;">LICENSE.MIT</div>
<svg class="a" style="left:104px;top:532px;" width="22" height="22" viewBox="0 0 22 22"><path d="M1.5 1.5 H10 L14 5.5 V20.5 H1.5 Z" fill="#f2f2f6" stroke="#a8a8a0"/><path d="M10 1.5 L14 5.5" fill="none" stroke="#c8a850" stroke-width="1.5"/><circle cx="15" cy="15.5" r="6" fill="#a6dcc2" stroke="#4aa684" stroke-width="1.2"/><circle cx="15" cy="15.5" r="3.6" fill="none" stroke="#4aa684" stroke-width="1.1"/><circle cx="15" cy="15.5" r="1.5" fill="#4aa684"/></svg>
<div class="t" style="left:131px;top:531px;font-size:16.3px;color:#3a3a3a;font-weight:normal;">Makefile</div>
<svg class="a" style="left:108px;top:557px;" width="16" height="20" viewBox="0 0 16 20"><path d="M1.5 1.5 H11 L14.5 5 V18.5 H1.5 Z" fill="#e9eef8" stroke="#8e9cb2"/><path d="M11 1.5 V5 H14.5 Z" fill="#f0e6c8" stroke="#c8b078" stroke-width="0.8"/><rect x="3.5" y="6.0" width="9" height="1.3" fill="#6f8cc4"/><rect x="3.5" y="8.8" width="9" height="1.3" fill="#6f8cc4"/><rect x="3.5" y="11.6" width="9" height="1.3" fill="#6f8cc4"/><rect x="3.5" y="14.399999999999999" width="9" height="1.3" fill="#6f8cc4"/><rect x="3.5" y="17.2" width="9" height="1.3" fill="#6f8cc4"/></svg>
<div class="t" style="left:131px;top:555px;font-size:16.3px;color:#3a3a3a;font-weight:normal;">README.md</div>
<div class="a" style="left:79.0px;top:585.5px;width:0;height:0;border-top:5.5px solid transparent;border-bottom:5.5px solid transparent;border-left:6px solid #303030"></div>
<svg class="a" style="left:91px;top:582px;" width="22" height="18" viewBox="0 0 22 18"><path d="M1 4 H8 L10 6 H19 V16 H1 Z" fill="#e3b54a"/><path d="M1 16 L4 8 H21 L18 16 Z" fill="#f7d98a" stroke="#d09a2c" stroke-width="1"/></svg>
<div class="t" style="left:117px;top:579px;font-size:16.3px;color:#3a3a3a;font-weight:normal;">bsp</div>
<div class="a" style="left:79.0px;top:609.5px;width:0;height:0;border-top:5.5px solid transparent;border-bottom:5.5px solid transparent;border-left:6px solid #303030"></div>
<svg class="a" style="left:91px;top:606px;" width="22" height="18" viewBox="0 0 22 18"><path d="M1 4 H8 L10 6 H19 V16 H1 Z" fill="#e3b54a"/><path d="M1 16 L4 8 H21 L18 16 Z" fill="#f7d98a" stroke="#d09a2c" stroke-width="1"/></svg>
<div class="t" style="left:117px;top:603px;font-size:16.3px;color:#3a3a3a;font-weight:normal;">freedom-metal</div>
<svg class="a" style="left:91px;top:628px;" width="22" height="22" viewBox="0 0 22 22"><path d="M1.5 1.5 H10 L14 5.5 V20.5 H1.5 Z" fill="#f2f2f6" stroke="#a8a8a0"/><path d="M10 1.5 L14 5.5" fill="none" stroke="#c8a850" stroke-width="1.5"/><circle cx="15" cy="15.5" r="6" fill="#a6dcc2" stroke="#4aa684" stroke-width="1.2"/><circle cx="15" cy="15.5" r="3.6" fill="none" stroke="#4aa684" stroke-width="1.1"/><circle cx="15" cy="15.5" r="1.5" fill="#4aa684"/></svg>
<div class="t" style="left:117px;top:627px;font-size:16.3px;color:#3a3a3a;font-weight:normal;">debug.mk</div>
<svg class="a" style="left:91px;top:652px;" width="22" height="22" viewBox="0 0 22 22"><path d="M1.5 1.5 H10 L14 5.5 V20.5 H1.5 Z" fill="#f2f2f6" stroke="#a8a8a0"/><path d="M10 1.5 L14 5.5" fill="none" stroke="#c8a850" stroke-width="1.5"/><circle cx="15" cy="15.5" r="6" fill="#a6dcc2" stroke="#4aa684" stroke-width="1.2"/><circle cx="15" cy="15.5" r="3.6" fill="none" stroke="#4aa684" stroke-width="1.1"/><circle cx="15" cy="15.5" r="1.5" fill="#4aa684"/></svg>
<div class="t" style="left:117px;top:651px;font-size:16.3px;color:#3a3a3a;font-weight:normal;">Makefile</div>
<svg class="a" style="left:91px;top:676px;" width="22" height="22" viewBox="0 0 22 22"><path d="M1.5 1.5 H10 L14 5.5 V20.5 H1.5 Z" fill="#f2f2f6" stroke="#a8a8a0"/><path d="M10 1.5 L14 5.5" fill="none" stroke="#c8a850" stroke-width="1.5"/><circle cx="15" cy="15.5" r="6" fill="#a6dcc2" stroke="#4aa684" stroke-width="1.2"/><circle cx="15" cy="15.5" r="3.6" fill="none" stroke="#4aa684" stroke-width="1.1"/><circle cx="15" cy="15.5" r="1.5" fill="#4aa684"/></svg>
<div class="t" style="left:117px;top:675px;font-size:16.3px;color:#3a3a3a;font-weight:normal;">release.mk</div>
<div class="a" style="left:58px;top:755px;width:406px;height:286px;border:1px solid #a6a6a6;border-radius:7px 7px 5px 5px;background:#e6e6e6"></div>
<div class="a" style="left:59px;top:756px;width:404px;height:35px;background:linear-gradient(#e4e4e4,#dcdcdc);border-radius:6px 6px 0 0"></div>
<div class="a" style="left:59px;top:791px;width:404px;height:1px;background:#b3b3b3"></div>
<div class="a" style="left:59px;top:756px;width:126px;height:36px;background:#e8e8e8;border-right:1px solid #b3b3b3;border-top-right-radius:7px;border-top-left-radius:6px;"></div>
<div class="t" style="left:63px;top:762px;line-height:24px;font-size:15px;font-weight:bold;color:#7d84a6;letter-spacing:-0.5px">(x)=</div>
<div class="t" style="left:94px;top:762px;font-size:16.3px;color:#141414;font-weight:normal;">Variabl</div>
<svg class="a" style="left:159px;top:766px;" width="16" height="16" viewBox="0 0 16 16"><path d="M3.2 3.2 L12.8 12.8 M12.8 3.2 L3.2 12.8" stroke="#111" stroke-width="5.4" stroke-linecap="square" stroke-linejoin="round"/><path d="M3.4 3.4 L12.6 12.6 M12.6 3.4 L3.4 12.6" stroke="#fff" stroke-width="2.6" stroke-linecap="square"/></svg>
<svg class="a" style="left:191px;top:764px;" width="24" height="22" viewBox="0 0 24 22"><circle cx="6" cy="7" r="4.5" fill="none" stroke="#8a8a9a" stroke-width="1.5"/><circle cx="15" cy="7" r="4.5" fill="none" stroke="#8a8a9a" stroke-width="1.5"/><path d="M10 7 H11 M1 2 L3 5 M20 2 L23 5" stroke="#8a8a9a" stroke-width="1.5"/><path d="M10 14 L14 18 M14 14 L10 18" stroke="#5a7ab0" stroke-width="1.3"/><rect x="16" y="14" width="6" height="1.5" fill="#5a7ab0"/><rect x="16" y="17" width="6" height="1.5" fill="#5a7ab0"/></svg>
<div class="t" style="left:222px;top:762px;font-size:16.3px;color:#4e4e4e;font-weight:normal;">Expres</div>
<svg class="a" style="left:292px;top:764px;" width="16" height="22" viewBox="0 0 16 22"><ellipse cx="8" cy="4" rx="6" ry="3" fill="#aac8f0" stroke="#3a6ab8"/><path d="M2 4 V18 Q8 22 14 18 V4" fill="#6a9ae0" stroke="#3a6ab8"/><rect x="4" y="6" width="3" height="11" fill="#cfe0f8"/></svg>
<div class="t" style="left:318px;top:762px;font-size:16.3px;color:#4e4e4e;font-weight:normal;">Memor</div>
<div class="a" style="left:399.0px;top:762.0px;width:24px;height:24px;border-radius:12px;background:#ececec"></div>
<div class="a" style="left:407px;top:770px;width:8px;height:3px;border:1px solid #444;background:#fff"></div>
<div class="a" style="left:426.0px;top:762.0px;width:24px;height:24px;border-radius:12px;background:#ececec"></div>
<div class="a" style="left:434px;top:770px;width:8px;height:8px;border:1px solid #444;border-top:3px double #444;background:#fff"></div>
<svg class="a" style="left:269px;top:801px;" width="16" height="16" viewBox="0 0 16 16"><path d="M3 3 L7 7 M2 10 H6 M2 13 H14" stroke="#c0c8d8" stroke-width="1.4"/><path d="M10 2 L14 6" stroke="#e0d0a0" stroke-width="1.4"/></svg>
<div class="a" style="left:292px;top:799px;width:25px;height:20px;background:#d6d6d6;border:1px solid #c2c2c2;border-radius:6px"></div>
<svg class="a" style="left:296px;top:801px;" width="17" height="16" viewBox="0 0 17 16"><path d="M2 6 H9" stroke="#e0c050" stroke-width="2"/><path d="M8 3 L13 13 M13 3 L8 13" stroke="#d04050" stroke-width="1.5"/><rect x="3" y="10" width="4" height="4" fill="#a0b0d0"/></svg>
<svg class="a" style="left:324px;top:801px;" width="16" height="16" viewBox="0 0 16 16"><rect x="2" y="3" width="12" height="10" fill="none" stroke="#c8d0e0"/><rect x="4" y="7" width="8" height="1.5" fill="#c8d0e0"/></svg>
<div class="a" style="left:355px;top:799px;width:1px;height:22px;background:#d6d6d6"></div>
<div class="a" style="left:365.0px;top:798.0px;width:22px;height:22px;border-radius:10px;background:#ececec"></div>
<svg class="a" style="left:368px;top:801px;" width="16" height="16" viewBox="0 0 16 16"><rect x="2" y="4" width="12" height="10" fill="#fff" stroke="#a0a0a0"/><rect x="2" y="4" width="12" height="2" fill="#e0c050"/><circle cx="11" cy="3" r="2" fill="#fff" stroke="#e0a030"/></svg>
<div class="a" style="left:393.0px;top:798.0px;width:22px;height:22px;border-radius:10px;background:#ececec"></div>
<svg class="a" style="left:396px;top:801px;" width="16" height="16" viewBox="0 0 16 16"><rect x="2" y="4" width="11" height="10" fill="#fff" stroke="#5a7ab8"/><path d="M6 10 L14 2 M10 2 H14 V6" stroke="#2a6ab0" stroke-width="1.4" fill="none"/></svg>
<div class="a" style="left:426.0px;top:798.0px;width:22px;height:22px;border-radius:10px;background:#ececec"></div>
<svg class="a" style="left:432px;top:805px;" width="10" height="7" viewBox="0 0 10 7"><path d="M1 1 H9 L5 6 Z" fill="#fff" stroke="#555" stroke-width="0.9"/></svg>
<div class="a" style="left:59px;top:823px;width:404px;height:35px;background:linear-gradient(#fafafa,#efefef);border-bottom:1px solid #cfcfcf;border-top:1px solid #e6e6e6"></div>
<div class="a" style="left:192px;top:824px;width:1px;height:33px;background:#d8d8d8"></div>
<div class="a" style="left:324px;top:824px;width:1px;height:33px;background:#d8d8d8"></div>
<div class="t" style="left:71px;top:828px;font-size:16.3px;color:#555;font-weight:normal;">Name</div>
<div class="t" style="left:203px;top:828px;font-size:16.3px;color:#555;font-weight:normal;">Type</div>
<div class="t" style="left:335px;top:828px;font-size:16.3px;color:#555;font-weight:normal;">Value</div>
<div class="a" style="left:59px;top:858px;width:404px;height:71px;background:#fff"></div>
<div class="a" style="left:59px;top:929px;width:404px;height:7px;background:#ececec"></div>
<div class="a" style="left:59px;top:936px;width:404px;height:103px;background:#fff;border-radius:0 0 5px 5px"></div>
<div class="a" style="left:471px;top:78px;width:721px;height:285px;border:1px solid #a6a6a6;border-radius:7px 7px 5px 5px;background:#e6e6e6"></div>
<div class="a" style="left:472px;top:79px;width:719px;height:37px;background:linear-gradient(#e4e4e4,#dcdcdc);border-radius:6px 6px 0 0"></div>
<div class="a" style="left:472px;top:116px;width:719px;height:1px;background:#b3b3b3"></div>
<div class="a" style="left:472px;top:79px;width:131px;height:38px;background:#e8e8e8;border-right:1px solid #b3b3b3;border-top-right-radius:7px;border-top-left-radius:6px;"></div>
<svg class="a" style="left:481px;top:89px;" width="20" height="20" viewBox="0 0 20 20"><rect x="1.5" y="2" width="17" height="13" rx="2" fill="#e6eefb" stroke="#2f5597" stroke-width="2"/><rect x="5" y="6" width="9" height="1.6" fill="#2f5597"/><rect x="5" y="9.5" width="6" height="1.6" fill="#2f5597"/><rect x="6" y="16" width="8" height="2.5" fill="#2f5597"/></svg>
<div class="t" style="left:508px;top:87px;font-size:16.4px;color:#141414;font-weight:normal;">Console</div>
<svg class="a" style="left:577px;top:91px;" width="16" height="16" viewBox="0 0 16 16"><path d="M3.2 3.2 L12.8 12.8 M12.8 3.2 L3.2 12.8" stroke="#111" stroke-width="5.4" stroke-linecap="square" stroke-linejoin="round"/><path d="M3.4 3.4 L12.6 12.6 M12.6 3.4 L3.4 12.6" stroke="#fff" stroke-width="2.6" stroke-linecap="square"/></svg>
<svg class="a" style="left:610px;top:88px;" width="22" height="22" viewBox="0 0 22 22"><rect x="1" y="1" width="20" height="20" fill="#f0f0f4" stroke="#a8b0c8"/><circle cx="8" cy="7" r="4.5" fill="#e03a30"/><circle cx="8" cy="17" r="4" fill="#f0b020"/><rect x="14" y="3" width="2" height="16" fill="#8898c0"/></svg>
<div class="t" style="left:641px;top:87px;font-size:16.3px;color:#4e4e4e;font-weight:normal;">Problems</div>
<div class="a" style="left:1126.0px;top:86.0px;width:24px;height:24px;border-radius:12px;background:#ececec"></div>
<div class="a" style="left:1134px;top:94px;width:8px;height:3px;border:1px solid #444;background:#fff"></div>
<div class="a" style="left:1153.0px;top:86.0px;width:24px;height:24px;border-radius:12px;background:#ececec"></div>
<div class="a" style="left:1161px;top:94px;width:8px;height:8px;border:1px solid #444;border-top:3px double #444;background:#fff"></div>
<div class="a" style="left:793.0px;top:125.0px;width:24px;height:26px;border-radius:12px;background:#ececec"></div>
<div class="a" style="left:801px;top:134px;width:9px;height:9px;background:#e8302a;border:1px solid #c42a22"></div>
<svg class="a" style="left:824px;top:130px;transform:scale(.82);transform-origin:50% 50%;" width="16" height="16" viewBox="0 0 16 16"><path d="M3 3 L13 13 M13 3 L3 13" stroke="#b8b8b8" stroke-width="3"/></svg>
<svg class="a" style="left:851px;top:130px;transform:scale(.82);transform-origin:50% 50%;" width="16" height="16" viewBox="0 0 16 16"><path d="M2 5 L9 12 M9 5 L2 12" stroke="#b8b8b8" stroke-width="2.2"/><path d="M7 2 L14 9 M14 2 L7 9" stroke="#c8c8c8" stroke-width="2"/></svg>
<div class="a" style="left:882px;top:125px;width:1px;height:27px;background:#d3d3d3"></div>
<div class="a" style="left:892.0px;top:125.0px;width:24px;height:26px;border-radius:12px;background:#ececec"></div>
<div class="a" style="left:919.0px;top:125.0px;width:24px;height:26px;border-radius:12px;background:#ececec"></div>
<div class="a" style="left:946.0px;top:125.0px;width:24px;height:26px;border-radius:12px;background:#ececec"></div>
<svg class="a" style="left:896px;top:130px;transform:scale(.82);transform-origin:50% 50%;" width="16" height="16" viewBox="0 0 16 16"><path d="M2 1 H10 L13 4 V15 H2 Z" fill="#f4f4f8" stroke="#9aa6bc"/><rect x="4" y="5" width="6" height="1.2" fill="#7a8ab0"/><rect x="4" y="8" width="6" height="1.2" fill="#7a8ab0"/><path d="M9 10 L15 15 M15 10 L9 15" stroke="#444" stroke-width="1.3"/></svg>
<svg class="a" style="left:923px;top:130px;transform:scale(.82);transform-origin:50% 50%;" width="16" height="16" viewBox="0 0 16 16"><rect x="6" y="1" width="9" height="14" fill="#eef2f8" stroke="#7a8ab0"/><rect x="2" y="7" width="7" height="8" fill="#f2c84e" stroke="#b08a2a"/><path d="M3.5 7 V5 Q5.5 2 7.5 5 V7" stroke="#666" fill="none"/></svg>
<svg class="a" style="left:950px;top:130px;transform:scale(.82);transform-origin:50% 50%;" width="16" height="16" viewBox="0 0 16 16"><rect x="2" y="1" width="10" height="14" fill="#f4f4f8" stroke="#b8bccc"/><rect x="7" y="6" width="8" height="9" fill="#f6e6b0" stroke="#d8b86a"/></svg>
<div class="a" style="left:972px;top:125px;width:26px;height:26px;background:#d8d8d8;border:1px solid #c4c4c4;border-radius:7px"></div>
<div class="a" style="left:999px;top:125px;width:26px;height:26px;background:#d8d8d8;border:1px solid #c4c4c4;border-radius:7px"></div>
<svg class="a" style="left:977px;top:130px;transform:scale(.82);transform-origin:50% 50%;" width="16" height="16" viewBox="0 0 16 16"><rect x="4" y="1" width="11" height="9" rx="1" fill="#eef3fb" stroke="#4a6aa8"/><rect x="1" y="5" width="10" height="9" rx="1" fill="#f4f7fc" stroke="#4a6aa8"/><rect x="3" y="8" width="5" height="1.3" fill="#4a6aa8"/></svg>
<svg class="a" style="left:1004px;top:130px;transform:scale(.82);transform-origin:50% 50%;" width="17" height="16" viewBox="0 0 17 16"><rect x="5" y="1" width="11" height="9" rx="1" fill="#fbeef0" stroke="#c84a6a"/><rect x="1" y="5" width="10" height="9" rx="1" fill="#f4f7fc" stroke="#4a6aa8"/><rect x="8" y="3" width="4" height="3" fill="#d03050"/></svg>
<div class="a" style="left:1035px;top:125px;width:1px;height:27px;background:#d3d3d3"></div>
<div class="a" style="left:1045.0px;top:125.0px;width:24px;height:26px;border-radius:12px;background:#ececec"></div>
<div class="a" style="left:1072.0px;top:125.0px;width:24px;height:26px;border-radius:12px;background:#ececec"></div>
<div class="a" style="left:1099.0px;top:125.0px;width:24px;height:26px;border-radius:12px;background:#ececec"></div>
<div class="a" style="left:1126.0px;top:125.0px;width:24px;height:26px;border-radius:12px;background:#ececec"></div>
<div class="a" style="left:1153.0px;top:125.0px;width:24px;height:26px;border-radius:12px;background:#ececec"></div>
<svg class="a" style="left:1049px;top:130px;transform:scale(.82);transform-origin:50% 50%;" width="16" height="16" viewBox="0 0 16 16"><rect x="1" y="5" width="13" height="10" fill="#f0f6f8" stroke="#5a8aa0"/><rect x="1" y="5" width="13" height="2.5" fill="#3a8a9a"/><path d="M6 9 L10 4 L15 2" stroke="#2e9e5e" stroke-width="2" fill="none"/></svg>
<svg class="a" style="left:1076px;top:130px;transform:scale(.82);transform-origin:50% 50%;" width="16" height="16" viewBox="0 0 16 16"><rect x="1" y="1" width="14" height="11" rx="1.5" fill="#e6eefb" stroke="#2f5597" stroke-width="1.5"/><rect x="4" y="4" width="7" height="1.3" fill="#2f5597"/><rect x="5" y="13" width="6" height="2" fill="#2f5597"/></svg>
<div class="a" style="left:1104.5px;top:134.5px;width:0;height:0;border-left:6.5px solid transparent;border-right:6.5px solid transparent;border-top:7px solid #5a5a5a"></div>
<svg class="a" style="left:1130px;top:130px;transform:scale(.82);transform-origin:50% 50%;" width="16" height="16" viewBox="0 0 16 16"><rect x="1" y="4" width="13" height="11" fill="#fff" stroke="#8a9ab8"/><rect x="1" y="4" width="13" height="2.5" fill="#5a7ab8"/><path d="M11 1 V7 M8 4 H14" stroke="#e0a020" stroke-width="1.5"/></svg>
<div class="a" style="left:1158.5px;top:134.5px;width:0;height:0;border-left:6.5px solid transparent;border-right:6.5px solid transparent;border-top:7px solid #5a5a5a"></div>
<div class="a" style="left:472px;top:152px;width:719px;height:24px;background:#e9e9e9"></div>
<div class="t" style="left:476px;top:153px;font-size:16.2px;color:#7a7a7a;font-weight:normal;">red-v-hello [SiFive GDB SEGGER J-Link Debugging] Semihosting and SWV</div>
<div class="a" style="left:472px;top:176px;width:3px;height:186px;background:#e9e9e9"></div>
<div class="a" style="left:475px;top:176px;width:714px;height:186px;background:#ffffff"></div>
<div class="a" style="left:1189px;top:176px;width:2px;height:186px;background:#ececec"></div>
<div class="t" style="left:479px;top:176px;line-height:22px;font-size:17.45px;font-family:'Liberation Mono',monospace;color:#111">SEGGER J-Link GDB Server V6.52e - Terminal output channel</div>
<div class="a" style="left:1199px;top:78px;width:720px;height:285px;border:1px solid #a6a6a6;border-radius:7px 7px 5px 5px;background:#e6e6e6"></div>
<div class="a" style="left:1200px;top:79px;width:718px;height:37px;background:linear-gradient(#e4e4e4,#dcdcdc);border-radius:6px 6px 0 0"></div>
<div class="a" style="left:1200px;top:116px;width:718px;height:1px;background:#b3b3b3"></div>
<div class="a" style="left:1200px;top:79px;width:121px;height:38px;background:#e8e8e8;border-right:1px solid #b3b3b3;border-top-right-radius:7px;border-top-left-radius:6px;"></div>
<svg class="a" style="left:1207px;top:88px;" width="24" height="22" viewBox="0 0 24 22"><ellipse cx="12" cy="12" rx="5.5" ry="6.5" fill="#a8d8b0" stroke="#2e6a5a" stroke-width="1.3"/><path d="M12 2 V6 M8 3 L10 6 M2 10 H6.5 M17.5 10 H22 M3 17 L7 15 M21 17 L17 15 M7 21 L9 17.5 M17 21 L15 17.5" stroke="#2e6a5a" stroke-width="1.7"/></svg>
<div class="t" style="left:1236px;top:87px;font-size:16.4px;color:#141414;font-weight:normal;">Debug</div>
<svg class="a" style="left:1293px;top:91px;" width="16" height="16" viewBox="0 0 16 16"><path d="M3.2 3.2 L12.8 12.8 M12.8 3.2 L3.2 12.8" stroke="#111" stroke-width="5.4" stroke-linecap="square" stroke-linejoin="round"/><path d="M3.4 3.4 L12.6 12.6 M12.6 3.4 L3.4 12.6" stroke="#fff" stroke-width="2.6" stroke-linecap="square"/></svg>
<svg class="a" style="left:1330px;top:88px;" width="23" height="22" viewBox="0 0 23 22"><rect x="1" y="1" width="19" height="16" rx="1" fill="#d6e6fb" stroke="#2f5597" stroke-width="1.8"/><rect x="4" y="4" width="9" height="2" fill="#2f5597"/><rect x="4" y="8" width="6" height="2" fill="#2f5597"/><rect x="4" y="17" width="10" height="3" fill="#2f5597"/><circle cx="17" cy="16" r="5" fill="#7ac890" stroke="#2e7a52"/></svg>
<div class="t" style="left:1357px;top:87px;font-size:16.3px;color:#4e4e4e;font-weight:normal;">Debugger Console</div>
<svg class="a" style="left:1506px;top:89px;" width="22" height="20" viewBox="0 0 22 20"><circle cx="6" cy="6" r="5" fill="#6a9ad8" stroke="#3a6ab0"/><circle cx="15" cy="13" r="5" fill="#4a8ad0" stroke="#2a5aa0"/><circle cx="5" cy="5" r="2" fill="#cfe0f8"/><circle cx="14" cy="12" r="2" fill="#cfe0f8"/></svg>
<div class="t" style="left:1536px;top:87px;font-size:16.3px;color:#4e4e4e;font-weight:normal;">Breakpoints</div>
<svg class="a" style="left:1749px;top:88px;" width="16" height="16" viewBox="0 0 16 16"><path d="M3 3 L13 13 M13 3 L3 13" stroke="#bdbdbd" stroke-width="2.2"/><path d="M6 2 L14 10 M2 6 L10 14" stroke="#cfcfcf" stroke-width="1.2"/></svg>
<div class="a" style="left:1779px;top:86px;width:1px;height:24px;background:#d0d0d0"></div>
<div class="a" style="left:1788.0px;top:82.0px;width:24px;height:24px;border-radius:12px;background:#ececec"></div>
<svg class="a" style="left:1792px;top:87px;" width="17" height="14" viewBox="0 0 17 14"><text x="1" y="12" font-size="12" font-weight="bold" fill="#1a1a70" font-family="Liberation Serif">i</text><path d="M6 7.5 H13 M10.5 5 L13.5 7.5 L10.5 10" stroke="#a0a818" stroke-width="1.8" fill="none"/></svg>
<div class="a" style="left:1824.0px;top:84.0px;width:24px;height:20px;border-radius:10px;background:#ececec"></div>
<svg class="a" style="left:1831px;top:90px;" width="10" height="7" viewBox="0 0 10 7"><path d="M1 1 H9 L5 6 Z" fill="#fff" stroke="#555" stroke-width="0.9"/></svg>
<div class="a" style="left:1854.0px;top:86.0px;width:24px;height:24px;border-radius:12px;background:#ececec"></div>
<div class="a" style="left:1862px;top:94px;width:8px;height:3px;border:1px solid #444;background:#fff"></div>
<div class="a" style="left:1881.0px;top:86.0px;width:24px;height:24px;border-radius:12px;background:#ececec"></div>
<div class="a" style="left:1889px;top:94px;width:8px;height:8px;border:1px solid #444;border-top:3px double #444;background:#fff"></div>
<div class="a" style="left:1200px;top:117px;width:718px;height:3px;background:#e6e6e6"></div>
<div class="a" style="left:1203px;top:120px;width:712px;height:142px;background:#f5f6f4"></div>
<div class="a" style="left:1203px;top:262px;width:712px;height:100px;background:#ffffff"></div>
<div class="a" style="left:1203px;top:168px;width:712px;height:24px;background:linear-gradient(#f6803e,#f26f2e)"></div>
<div class="a" style="left:1204.5px;top:129.0px;width:0;height:0;border-left:5.5px solid transparent;border-right:5.5px solid transparent;border-top:6px solid #303030"></div>
<svg class="a" style="left:1220px;top:122px;" width="20" height="21" viewBox="0 0 20 21"><path d="M5 2 H15 L18.5 12.5 L10 19 L1.5 12.5 Z" fill="#fff" stroke="#333" stroke-width="1.8" stroke-linejoin="round"/><rect x="8" y="6.3" width="8" height="2" fill="#333"/><path d="M3.2 10.5 H14.5 L10 14 L8.5 13 H3.2 Z" fill="#333"/></svg>
<div class="t" style="left:1245px;top:120px;font-size:15.95px;color:#3a3a3a;font-weight:normal;">red-v-hello [SiFive GDB SEGGER J-Link Debugging]</div>
<div class="a" style="left:1218.5px;top:153.0px;width:0;height:0;border-left:5.5px solid transparent;border-right:5.5px solid transparent;border-top:6px solid #303030"></div>
<svg class="a" style="left:1232px;top:145px;" width="24" height="23" viewBox="0 0 24 23"><path d="M4 8 Q6 2 12 3" stroke="#2a7ad0" stroke-width="2" fill="none"/><path d="M20 15 Q18 21 12 20" stroke="#2a7ad0" stroke-width="2" fill="none"/><circle cx="16" cy="8" r="5.5" fill="#f2c030" stroke="#c08a10" stroke-dasharray="2 1"/><circle cx="7" cy="15" r="5.5" fill="#f2c030" stroke="#c08a10" stroke-dasharray="2 1"/></svg>
<div class="t" style="left:1259px;top:144px;font-size:16.3px;color:#2a2a2a;font-weight:normal;">hello.elf</div>
<svg class="a" style="left:1245px;top:170px;" width="26" height="22" viewBox="0 0 26 22"><circle cx="16" cy="8" r="6" fill="#f2b030" stroke="#8a5a10" stroke-width="1.2" stroke-dasharray="2 1"/><circle cx="16" cy="8" r="2.5" fill="#fff4d0"/><path d="M1 12 L9 16 L1 20 Z" fill="#2eae5e"/></svg>
<div class="t" style="left:1272px;top:168px;font-size:16.3px;color:#fff6ee;font-weight:normal;">Thread #1 (Running : User Request)</div>
<svg class="a" style="left:1239px;top:193px;" width="18" height="24" viewBox="0 0 18 24"><rect x="6" y="2" width="10" height="19" rx="1" fill="#c8ccd0" stroke="#8a9098"/><rect x="8" y="5" width="6" height="2" fill="#fff"/><path d="M1 14 L8 18 L1 22 Z" fill="#2eae5e"/></svg>
<div class="t" style="left:1259px;top:192px;font-size:16.3px;color:#3a3a3a;font-weight:normal;">JLinkGDBServerCLExe</div>
<div class="t" style="left:1259px;top:216px;font-size:16.3px;color:#3a3a3a;font-weight:normal;">riscv64-unknown-elf-gdb</div>
<div class="t" style="left:1259px;top:240px;font-size:16.3px;color:#3a3a3a;font-weight:normal;">Semihosting and SWV</div>
<div class="a" style="left:471px;top:371px;width:950px;height:670px;border:1px solid #a6a6a6;border-radius:7px 7px 5px 5px;background:#e6e6e6"></div>
<div class="a" style="left:472px;top:372px;width:948px;height:37px;background:linear-gradient(#e4e4e4,#dcdcdc);border-radius:6px 6px 0 0"></div>
<div class="a" style="left:472px;top:409px;width:948px;height:1px;background:#b3b3b3"></div>
<svg class="a" style="left:481px;top:381px;" width="19" height="21" viewBox="0 0 19 21"><path d="M1.5 1.5 H12 L16.5 6 V19.5 H1.5 Z" fill="#fbf6e6" stroke="#a89a72"/><text x="4.5" y="17" font-size="13" font-weight="bold" fill="#3b68c0" font-family="Liberation Sans">c</text><rect x="2.5" y="14.5" width="2" height="2" fill="#3b68c0"/></svg>
<div class="t" style="left:509px;top:379px;font-size:16.3px;color:#4e4e4e;font-weight:normal;">hello.c</div>
<div class="a" style="left:595px;top:372px;width:100px;height:38px;background:#ececec;border-left:1px solid #b3b3b3;border-right:1px solid #b3b3b3;border-top:1px solid #b3b3b3;border-radius:7px 7px 0 0"></div>
<svg class="a" style="left:601px;top:381px;" width="24" height="21" viewBox="0 0 24 21"><rect x="1" y="1" width="22" height="19" fill="#f4f7fc" stroke="#a8a890"/><rect x="1" y="1" width="22" height="4" fill="#5a8ad0"/><text x="7" y="17" font-size="12" font-weight="bold" fill="#3b68c0" font-family="Liberation Sans">c</text></svg>
<div class="t" style="left:630px;top:379px;font-size:16.4px;color:#141414;font-weight:normal;">0x0</div>
<svg class="a" style="left:667px;top:383px;" width="16" height="16" viewBox="0 0 16 16"><path d="M3.2 3.2 L12.8 12.8 M12.8 3.2 L3.2 12.8" stroke="#111" stroke-width="5.4" stroke-linecap="square" stroke-linejoin="round"/><path d="M3.4 3.4 L12.6 12.6 M12.6 3.4 L3.4 12.6" stroke="#fff" stroke-width="2.6" stroke-linecap="square"/></svg>
<div class="a" style="left:1355.0px;top:378.0px;width:24px;height:24px;border-radius:12px;background:#ececec"></div>
<div class="a" style="left:1363px;top:386px;width:8px;height:3px;border:1px solid #444;background:#fff"></div>
<div class="a" style="left:1383.0px;top:378.0px;width:24px;height:24px;border-radius:12px;background:#ececec"></div>
<div class="a" style="left:1391px;top:386px;width:8px;height:8px;border:1px solid #444;border-top:3px double #444;background:#fff"></div>
<div class="a" style="left:472px;top:410px;width:948px;height:630px;background:#ffffff;border-radius:0 0 5px 5px"></div>
<div class="a" style="left:472px;top:410px;width:948px;height:3px;background:#ececec"></div>
<div class="t" style="left:483px;top:417px;font-size:16.3px;color:#202020;font-weight:normal;letter-spacing:0.34px">Break at address "0x0" with no debug information available</div>
<div class="a" style="left:484px;top:455px;width:165px;height:32px;background:linear-gradient(#f6f6f6,#e6e6e6);border:1px solid #b6b6b6;border-radius:6px"></div>
<div class="t" style="left:493px;top:459px;font-size:16.3px;color:#606060;font-weight:normal;">View Disassembly...</div>
<div class="t" style="left:483px;top:510px;font-size:16.3px;color:#3a3a3a;font-weight:normal;letter-spacing:0.3px">Configure when this editor is shown</div>
<svg class="a" style="left:1367px;top:389px;" width="14" height="22" viewBox="0 0 14 22"><path d="M1.5 1.5 V17.5 L5.5 13.5 L8.5 20 L11 19 L8 12.5 H13 Z" fill="#1a1a1a" stroke="#fff" stroke-width="1.2"/></svg>
<div class="a" style="left:1428px;top:371px;width:491px;height:670px;border:1px solid #a6a6a6;border-radius:7px 7px 5px 5px;background:#fcfcfc"></div>
<div class="a" style="left:1429px;top:372px;width:489px;height:36px;background:linear-gradient(#eeeeee,#e6e6e6);border-radius:6px 6px 0 0"></div>
<div class="a" style="left:1429px;top:408px;width:489px;height:1px;background:#b3b3b3"></div>
<svg class="a" style="left:1436px;top:381px;" width="21" height="21" viewBox="0 0 21 21"><rect x="1" y="1" width="7" height="7" fill="#fff" stroke="#3a6ab0" stroke-width="1.5"/><rect x="1" y="12" width="7" height="7" fill="#fff" stroke="#3a6ab0" stroke-width="1.5"/><rect x="10" y="7" width="4" height="3" fill="#3a6ab0"/><rect x="16" y="7" width="4" height="3" fill="#3a6ab0"/><rect x="10" y="13" width="4" height="3" fill="#3a6ab0"/></svg>
<div class="t" style="left:1465px;top:379px;font-size:16.3px;color:#4e4e4e;font-weight:normal;">Outline</div>
<svg class="a" style="left:1533px;top:383px;" width="26" height="17" viewBox="0 0 26 17"><rect x="1" y="1" width="6" height="3" fill="#3a5ab0"/><rect x="9" y="1" width="6" height="3" fill="#3a5ab0"/><rect x="17" y="1" width="4" height="3" fill="#3a5ab0"/><rect x="1" y="6" width="10" height="3" fill="#3a5ab0"/><rect x="13" y="6" width="8" height="3" fill="#3a5ab0"/><rect x="1" y="11" width="14" height="3" fill="#3a5ab0"/><rect x="23" y="1" width="2" height="2" fill="#3a5ab0"/></svg>
<div class="t" style="left:1564px;top:379px;font-size:16.3px;color:#4e4e4e;font-weight:normal;">Disassembly</div>
<div class="a" style="left:1665px;top:372px;width:136px;height:37px;background:linear-gradient(#f6f6f6,#fcfcfc);border-left:1px solid #b3b3b3;border-right:1px solid #b3b3b3;border-top:1px solid #b3b3b3;border-radius:7px 7px 0 0"></div>
<svg class="a" style="left:1669px;top:380px;" width="25" height="24" viewBox="0 0 25 24"><rect x="8" y="1" width="15" height="12" fill="#2a5ad0" stroke="#1a3a90"/><rect x="11" y="3.5" width="9" height="6" fill="#cfe0ff"/><path d="M2 22 L10 12" stroke="#9a9a9a" stroke-width="4"/><circle cx="4" cy="20" r="3" fill="#8a8a8a"/></svg>
<div class="t" style="left:1699px;top:379px;font-size:16.4px;color:#141414;font-weight:normal;">Terminal</div>
<svg class="a" style="left:1772px;top:383px;" width="16" height="16" viewBox="0 0 16 16"><path d="M3.2 3.2 L12.8 12.8 M12.8 3.2 L3.2 12.8" stroke="#111" stroke-width="5.4" stroke-linecap="square" stroke-linejoin="round"/><path d="M3.4 3.4 L12.6 12.6 M12.6 3.4 L3.4 12.6" stroke="#fff" stroke-width="2.6" stroke-linecap="square"/></svg>
<div class="a" style="left:1860px;top:386px;width:8px;height:3px;border:1px solid #444;background:#fff"></div>
<div class="a" style="left:1887px;top:386px;width:8px;height:8px;border:1px solid #444;border-top:3px double #444;background:#fff"></div>
<div class="a" style="left:1655.0px;top:415.0px;width:22px;height:22px;border-radius:10px;background:#f2f2f2"></div>
<svg class="a" style="left:1659px;top:419px;" width="15" height="15" viewBox="0 0 15 15"><rect x="1" y="1" width="13" height="10" rx="1" fill="#e6eefb" stroke="#2f5597" stroke-width="1.4"/><rect x="4" y="12" width="7" height="2" fill="#2f5597"/></svg>
<svg class="a" style="left:1686px;top:419px;" width="15" height="15" viewBox="0 0 15 15"><path d="M2 13 L7 4 L11 9 L14 2" stroke="#e8a0a8" stroke-width="1.4" fill="none"/><circle cx="14" cy="2.5" r="1.5" fill="#e06a70"/></svg>
<div class="a" style="left:1715px;top:414px;width:1px;height:24px;background:#d3d3d3"></div>
<div class="a" style="left:1727.0px;top:415.0px;width:22px;height:22px;border-radius:10px;background:#f2f2f2"></div>
<div class="a" style="left:1754.0px;top:415.0px;width:22px;height:22px;border-radius:10px;background:#f2f2f2"></div>
<div class="a" style="left:1781.0px;top:415.0px;width:22px;height:22px;border-radius:10px;background:#f2f2f2"></div>
<svg class="a" style="left:1730px;top:418px;" width="16" height="16" viewBox="0 0 16 16"><rect x="3" y="1" width="10" height="14" fill="#f4f4f8" stroke="#b8c0d0"/><rect x="1" y="5" width="6" height="8" fill="#fff" stroke="#b8c0d0"/><rect x="5" y="4" width="6" height="1.2" fill="#a0b0c8"/></svg>
<svg class="a" style="left:1757px;top:418px;" width="16" height="16" viewBox="0 0 16 16"><path d="M2 1 H10 L13 4 V15 H2 Z" fill="#f4f4f8" stroke="#9aa6bc"/><rect x="4" y="5" width="6" height="1.2" fill="#7a8ab0"/><path d="M9 10 L15 15 M15 10 L9 15" stroke="#444" stroke-width="1.3"/></svg>
<svg class="a" style="left:1784px;top:418px;" width="16" height="16" viewBox="0 0 16 16"><rect x="6" y="1" width="9" height="14" fill="#eef2f8" stroke="#7a8ab0"/><rect x="2" y="7" width="7" height="8" fill="#f2c84e" stroke="#b08a2a"/></svg>
<div class="a" style="left:1814px;top:414px;width:1px;height:24px;background:#d3d3d3"></div>
<svg class="a" style="left:1829px;top:418px;" width="16" height="16" viewBox="0 0 16 16"><rect x="4" y="1" width="10" height="12" fill="#f4f4f8" stroke="#c8ccd8"/><rect x="1" y="4" width="10" height="11" fill="#f8f8fa" stroke="#c8ccd8"/></svg>
<div class="a" style="left:1853.0px;top:415.0px;width:22px;height:22px;border-radius:10px;background:#f2f2f2"></div>
<svg class="a" style="left:1856px;top:418px;" width="16" height="16" viewBox="0 0 16 16"><rect x="2" y="3" width="12" height="12" fill="#f2d480" stroke="#a08030"/><rect x="5" y="1" width="6" height="4" fill="#fff" stroke="#888"/><rect x="5" y="7" width="7" height="7" fill="#fff" stroke="#aaa"/></svg>
<div class="a" style="left:1881.0px;top:415.0px;width:22px;height:22px;border-radius:10px;background:#f2f2f2"></div>
<svg class="a" style="left:1884px;top:418px;" width="16" height="16" viewBox="0 0 16 16"><rect x="6" y="1" width="9" height="8" fill="#2a5ad0" stroke="#1a3a90"/><path d="M1 15 L8 8" stroke="#888" stroke-width="3"/><path d="M10 10 L15 15" stroke="#2a8a4a" stroke-width="1.5"/></svg>
<div class="a" style="left:1433px;top:440px;width:481px;height:597px;border:1px solid #b8b8b8;border-radius:6px 6px 3px 3px;background:#ffffff"></div>
<div class="a" style="left:1434px;top:441px;width:233px;height:30px;background:#ffffff;border-right:1px solid #c0c0c0;border-top-right-radius:6px;border-top-left-radius:5px"></div>
<div class="a" style="left:1667px;top:470px;width:246px;height:1px;background:#c0c0c0"></div>
<svg class="a" style="left:1440px;top:445px;" width="22" height="22" viewBox="0 0 22 22"><rect x="1.5" y="2" width="18" height="14" rx="2" fill="#e6eefb" stroke="#2f5597" stroke-width="2"/><rect x="5" y="6" width="10" height="1.6" fill="#2f5597"/><rect x="5" y="9.5" width="7" height="1.6" fill="#2f5597"/><rect x="6" y="17" width="9" height="2.5" fill="#2f5597"/></svg>
<div class="t" style="left:1468px;top:444px;font-size:16.3px;color:#141414;font-weight:normal;">&lt;Closed&gt; /dev/video0</div>
<svg class="a" style="left:1641px;top:448px;" width="16" height="16" viewBox="0 0 16 16"><path d="M3.2 3.2 L12.8 12.8 M12.8 3.2 L3.2 12.8" stroke="#111" stroke-width="5.4" stroke-linecap="square" stroke-linejoin="round"/><path d="M3.4 3.4 L12.6 12.6 M12.6 3.4 L3.4 12.6" stroke="#fff" stroke-width="2.6" stroke-linecap="square"/></svg>
<div class="a" style="left:58px;top:1041px;width:1862px;height:39px;background:linear-gradient(#e3e3e3,#dcdcdc)"></div>
<div class="a" style="left:1547px;top:1052px;width:2px;height:2px;background:#a8a8a8"></div>
<div class="a" style="left:1547px;top:1057px;width:2px;height:2px;background:#a8a8a8"></div>
<div class="a" style="left:1547px;top:1062px;width:2px;height:2px;background:#a8a8a8"></div>
<div class="a" style="left:1547px;top:1067px;width:2px;height:2px;background:#a8a8a8"></div>
<div class="a" style="left:724px;top:215px;width:526px;height:531px;border-radius:6px 6px 0 0;box-shadow:0 8px 22px 4px rgba(0,0,0,.40),0 2px 5px rgba(0,0,0,.35)"></div>
<div class="a" style="left:724px;top:215px;width:526px;height:531px;background:#f0f0ef;border-radius:6px 6px 0 0"></div>
<div class="a" style="left:724px;top:215px;width:526px;height:30px;background:linear-gradient(#56544e,#45433e 50%,#3c3b37);border-radius:6px 6px 0 0"></div>
<svg class="a" style="left:731px;top:219px;" width="44" height="22" viewBox="0 0 44 22"><defs><radialGradient id="og" cx="50%" cy="35%" r="60%"><stop offset="0" stop-color="#fa8a5a"/><stop offset="1" stop-color="#e2521e"/></radialGradient></defs><circle cx="11" cy="11.5" r="9" fill="url(#og)" stroke="#3a2a22" stroke-width="1"/><path d="M8 8.5 L14 14.5 M14 8.5 L8 14.5" stroke="#3a2a22" stroke-width="1.6"/><circle cx="33" cy="11.5" r="8.5" fill="#6a6863" stroke="#4a4844"/><rect x="29.5" y="8" width="7" height="7" fill="#7a7873" stroke="#55534e" stroke-width="1.3"/></svg>
<div class="t" style="left:786px;top:218px;line-height:24px;font-size:16.4px;font-weight:bold;color:#dfdbd2">Launch Terminal</div>
<div class="t" style="left:746px;top:279px;font-size:16.3px;color:#3c3c3c;font-weight:normal;">Choose terminal:</div>
<div class="a" style="left:880px;top:273px;width:346px;height:37px;background:linear-gradient(#fbfbfb,#efefef);border:1px solid #f0a07a;border-radius:6px;box-shadow:0 0 0 1px #f8d8c8"></div>
<div class="t" style="left:891px;top:279px;font-size:16.3px;color:#3c3c3c;font-weight:normal;">Serial Terminal</div>
<div class="a" style="left:1198.0px;top:287.0px;width:0;height:0;border-left:7.0px solid transparent;border-right:7.0px solid transparent;border-top:8px solid #3c3c3c"></div>
<div class="a" style="left:747px;top:330px;width:481px;height:324px;border:1px solid #cdcdcd;border-radius:4px"></div>
<div class="a" style="left:749px;top:318px;width:64px;height:22px;background:#f0f0ef"></div>
<div class="t" style="left:751px;top:317px;font-size:16.3px;color:#3c3c3c;font-weight:normal;">Settings</div>
<div class="t" style="left:754px;top:354px;font-size:16.3px;color:#3c3c3c;font-weight:normal;">Serial port:</div>
<div class="a" style="left:845px;top:347px;width:373px;height:38px;background:linear-gradient(#fcfcfc,#f6f6f6 50%,#ececec);border:1px solid #a2a2a2;border-radius:6px;box-shadow:0 1px 1px rgba(0,0,0,.08)"></div>
<div class="a" style="left:846px;top:348px;width:329px;height:36px;background:linear-gradient(#ffffff,#f8f8f8);border-radius:5px 0 0 5px"></div>
<div class="a" style="left:1175px;top:348px;width:1px;height:36px;background:#cfcfcf"></div>
<div class="t" style="left:855px;top:354px;font-size:16.3px;color:#3c3c3c;font-weight:normal;">/dev/ttyACM1</div>
<div class="a" style="left:1190.0px;top:362.0px;width:0;height:0;border-left:7.0px solid transparent;border-right:7.0px solid transparent;border-top:8px solid #3c3c3c"></div>
<div class="t" style="left:754px;top:403px;font-size:16.3px;color:#3c3c3c;font-weight:normal;">Baud rate:</div>
<div class="a" style="left:845px;top:397px;width:373px;height:37px;background:linear-gradient(#fcfcfc,#f6f6f6 50%,#ececec);border:1px solid #a2a2a2;border-radius:6px;box-shadow:0 1px 1px rgba(0,0,0,.08)"></div>
<div class="t" style="left:857px;top:403px;font-size:16.3px;color:#3c3c3c;font-weight:normal;">115200</div>
<div class="a" style="left:1190.0px;top:411.0px;width:0;height:0;border-left:7.0px solid transparent;border-right:7.0px solid transparent;border-top:8px solid #3c3c3c"></div>
<div class="t" style="left:754px;top:453px;font-size:16.3px;color:#3c3c3c;font-weight:normal;">Data size:</div>
<div class="a" style="left:845px;top:446px;width:373px;height:38px;background:linear-gradient(#fcfcfc,#f6f6f6 50%,#ececec);border:1px solid #a2a2a2;border-radius:6px;box-shadow:0 1px 1px rgba(0,0,0,.08)"></div>
<div class="t" style="left:857px;top:453px;font-size:16.3px;color:#3c3c3c;font-weight:normal;">8</div>
<div class="a" style="left:1190.0px;top:461.0px;width:0;height:0;border-left:7.0px solid transparent;border-right:7.0px solid transparent;border-top:8px solid #3c3c3c"></div>
<div class="t" style="left:754px;top:502px;font-size:16.3px;color:#3c3c3c;font-weight:normal;">Parity:</div>
<div class="a" style="left:845px;top:496px;width:373px;height:37px;background:linear-gradient(#fcfcfc,#f6f6f6 50%,#ececec);border:1px solid #a2a2a2;border-radius:6px;box-shadow:0 1px 1px rgba(0,0,0,.08)"></div>
<div class="t" style="left:857px;top:502px;font-size:16.3px;color:#3c3c3c;font-weight:normal;">None</div>
<div class="a" style="left:1190.0px;top:510.0px;width:0;height:0;border-left:7.0px solid transparent;border-right:7.0px solid transparent;border-top:8px solid #3c3c3c"></div>
<div class="t" style="left:754px;top:552px;font-size:16.3px;color:#3c3c3c;font-weight:normal;">Stop bits:</div>
<div class="a" style="left:845px;top:545px;width:373px;height:38px;background:linear-gradient(#fcfcfc,#f6f6f6 50%,#ececec);border:1px solid #a2a2a2;border-radius:6px;box-shadow:0 1px 1px rgba(0,0,0,.08)"></div>
<div class="t" style="left:857px;top:552px;font-size:16.3px;color:#3c3c3c;font-weight:normal;">1</div>
<div class="a" style="left:1190.0px;top:560.0px;width:0;height:0;border-left:7.0px solid transparent;border-right:7.0px solid transparent;border-top:8px solid #3c3c3c"></div>
<div class="a" style="left:755px;top:593px;width:466px;height:1px;background:#dcdcdc"></div>
<div class="a" style="left:755px;top:594px;width:466px;height:1px;background:#fafafa"></div>
<div class="t" style="left:754px;top:612px;font-size:16.3px;color:#3c3c3c;font-weight:normal;">Encoding:</div>
<div class="a" style="left:835px;top:605px;width:383px;height:38px;background:linear-gradient(#fcfcfc,#f6f6f6 50%,#ececec);border:1px solid #a2a2a2;border-radius:6px;box-shadow:0 1px 1px rgba(0,0,0,.08)"></div>
<div class="t" style="left:846px;top:612px;font-size:16.3px;color:#3c3c3c;font-weight:normal;">Default (ISO-8859-1)</div>
<div class="a" style="left:1190.0px;top:620.0px;width:0;height:0;border-left:7.0px solid transparent;border-right:7.0px solid transparent;border-top:8px solid #3c3c3c"></div>
<svg class="a" style="left:746px;top:703px;" width="18" height="18" viewBox="0 0 18 18"><circle cx="9" cy="9" r="7.5" fill="#f6f6f6" stroke="#5a6470" stroke-width="1.3"/><text x="5" y="13.5" font-size="12" font-weight="bold" fill="#4a525a" font-family="Liberation Sans">?</text></svg>
<div class="a" style="left:1003px;top:697px;width:110px;height:32px;background:linear-gradient(#fcfcfc,#eaeaea);border:1px solid #b0b0b0;border-radius:6px"></div>
<div class="t" style="left:1003px;top:700px;width:110px;text-align:center;line-height:24px;font-size:16.3px;color:#3c3c3c">Cancel</div>
<div class="a" style="left:1124px;top:697px;width:110px;height:32px;background:linear-gradient(#fcfcfc,#eaeaea);border:2px solid #a4a4a4;border-radius:6px"></div>
<div class="t" style="left:1124px;top:700px;width:110px;text-align:center;line-height:24px;font-size:16.3px;color:#3c3c3c">OK</div>
</body></html>
